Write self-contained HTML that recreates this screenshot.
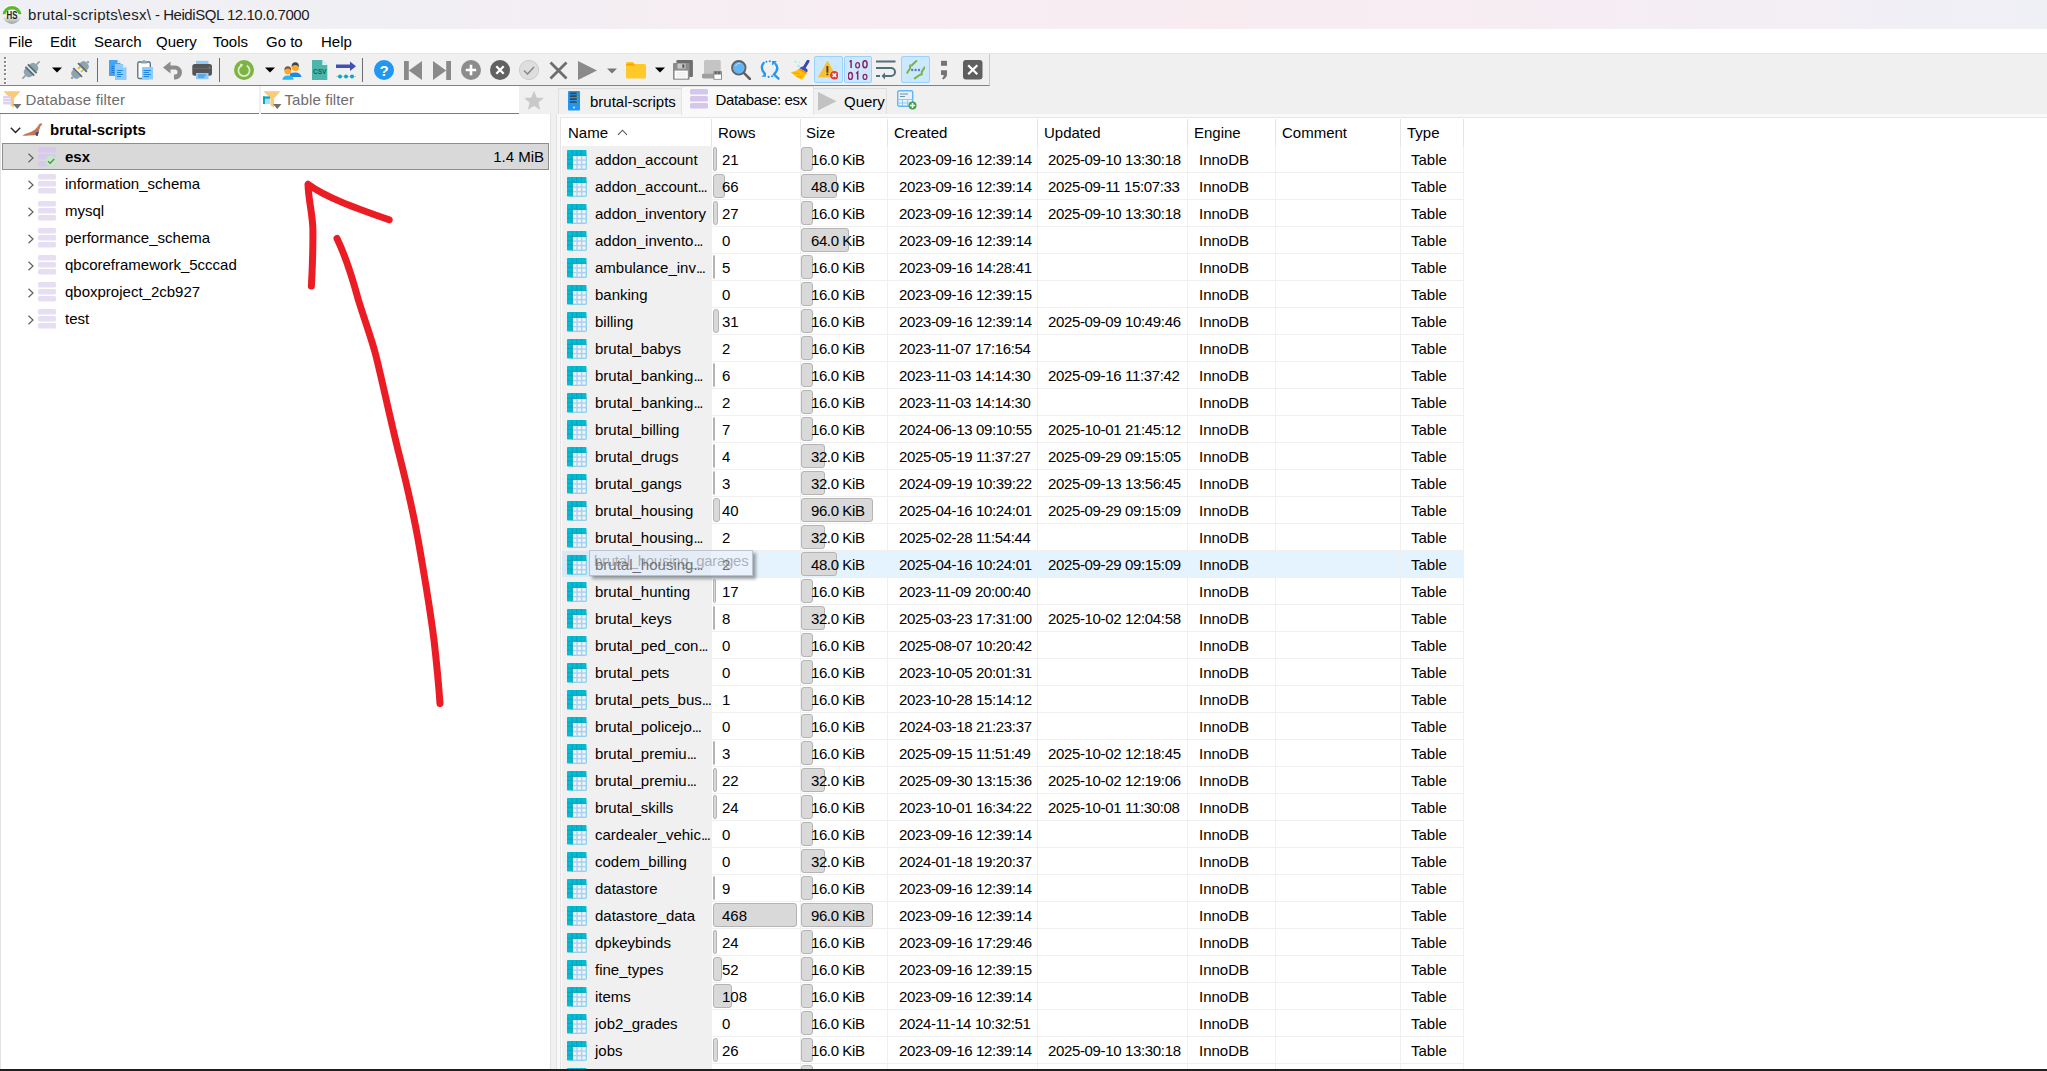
<!DOCTYPE html>
<html><head><meta charset="utf-8">
<style>
*{box-sizing:border-box;margin:0;padding:0}
html,body{width:2047px;height:1071px;overflow:hidden;background:#f0f0f0;font-family:"Liberation Sans",sans-serif;font-size:15px;color:#000}
.abs{position:absolute}
svg{display:block}
#title{position:absolute;left:0;top:0;width:2047px;height:29px;background:linear-gradient(90deg,#eef0f5 0%,#f1eff4 20%,#f7edf2 40%,#f8ecf1 60%,#f6edf3 75%,#eff0f6 100%)}
#title .t{position:absolute;left:28px;top:5.5px;font-size:15px;color:#1c1c1c;white-space:nowrap}
#menu{position:absolute;left:0;top:29px;width:2047px;height:24px;background:#fff}
#menu span{position:absolute;top:4px;font-size:15px}
#tb{position:absolute;left:0;top:54px;width:990px;height:32px;background:#f0f0f0;border-right:1px solid #c8c8c8;border-bottom:1px solid #828282}
#filters{position:absolute;left:0;top:86px;width:551px;height:28px;background:#f0f0f0}
.fbox{position:absolute;top:0;height:28px;background:#fff;border-bottom:1px solid #7a7a7a}
.fbox span{position:absolute;left:25px;top:5px;color:#6d6d6d}
#tree{position:absolute;left:0;top:114px;width:551px;height:955px;background:#fff;border-left:1px solid #e3e3e3;border-right:1px solid #e3e3e3}
.tn{position:absolute;height:27px;left:0;width:551px}
.tn span{position:absolute;top:5px}
#page{position:absolute;left:556px;top:113px;width:1491px;height:956px;background:#f9f9f9;border-left:1px solid #e3e3e3;border-top:1px solid #e3e3e3}
#grid{position:absolute;left:560px;top:117px;width:1487px;height:952px;background:#fff;border-left:1px solid #e5e5e5;border-top:1px solid #e5e5e5;overflow:hidden}
.row{position:absolute;left:1px;width:902px;height:27px}
.row .ncol{position:absolute;left:0;top:0;width:150px;height:27px}
.row::after{content:"";position:absolute;left:0;top:26px;width:902px;height:1px;background:#f0f0f0}
.ticon{position:absolute;left:5px;top:4px;width:20px;height:20px}
.c{position:absolute;top:5px;white-space:nowrap}
.dt{letter-spacing:-0.35px}
.sz{width:62px;text-align:right;letter-spacing:-0.4px}
.bar{position:absolute;top:1px;height:24px;background:#d9d9d9;border:1px solid #b4b4b4;border-radius:3px}
.vl{position:absolute;top:0;width:1px;height:952px;background:#f0f0f0}
.hd{position:absolute;top:5.5px;white-space:nowrap}
.hdiv{position:absolute;top:1px;width:1px;height:27px;background:#e5e5e5}
#bottom{position:absolute;left:0;top:1069px;width:2047px;height:2px;background:#1f1f1f}
.tab{position:absolute;height:26px}
.tt{white-space:nowrap}
.tab span{position:absolute;white-space:nowrap}
</style></head><body>
<div id="title">
 <svg class="abs" style="left:2px;top:3.5px" width="20" height="20" viewBox="0 0 20 20"><defs><linearGradient id="hg" x1="0" y1="0" x2="0" y2="1"><stop offset="0" stop-color="#fff"/><stop offset="0.6" stop-color="#f2f2f2"/><stop offset="1" stop-color="#9aa29c"/></linearGradient></defs><circle cx="10" cy="10.3" r="9.6" fill="url(#hg)"/><path d="M0.5 10.2A9.6 9.6 0 0 1 19.5 10.2L16.5 10.2A6.6 5.8 0 0 0 3.5 10.2Z" fill="#5cb82e"/><text x="10" y="14.7" font-size="10.5" font-family="Liberation Sans" text-anchor="middle" fill="#222" transform="translate(10 0) scale(0.75 1) translate(-10 0)" font-weight="bold">HS</text></svg>
 <div class="t"><span style="letter-spacing:0.3px">brutal-scripts\esx\</span><span style="letter-spacing:-0.45px"> - HeidiSQL 12.10.0.7000</span></div>
</div>
<div id="menu">
 <span style="left:8.5px">File</span><span style="left:50px">Edit</span><span style="left:94px">Search</span><span style="left:156px">Query</span><span style="left:213px">Tools</span><span style="left:266px">Go to</span><span style="left:321px">Help</span>
</div>
<div class="abs" style="left:0;top:53px;width:2047px;height:1px;background:#e6e6e6"></div>
<div id="tb"></div>
<div class="abs" style="left:4px;top:57.0px;width:2px;height:2px;background:#8a8a8a;box-shadow:1px 1px 0 #fff"></div><div class="abs" style="left:4px;top:61.1px;width:2px;height:2px;background:#8a8a8a;box-shadow:1px 1px 0 #fff"></div><div class="abs" style="left:4px;top:65.2px;width:2px;height:2px;background:#8a8a8a;box-shadow:1px 1px 0 #fff"></div><div class="abs" style="left:4px;top:69.3px;width:2px;height:2px;background:#8a8a8a;box-shadow:1px 1px 0 #fff"></div><div class="abs" style="left:4px;top:73.4px;width:2px;height:2px;background:#8a8a8a;box-shadow:1px 1px 0 #fff"></div><div class="abs" style="left:4px;top:77.5px;width:2px;height:2px;background:#8a8a8a;box-shadow:1px 1px 0 #fff"></div><div class="abs" style="left:4px;top:81.6px;width:2px;height:2px;background:#8a8a8a;box-shadow:1px 1px 0 #fff"></div><svg class="abs" style="left:21px;top:60px" width="20" height="20" viewBox="0 0 20 20"><g transform="rotate(45 10 10)">
<rect x="9.1" y="-2.4" width="1.8" height="5" rx="0.9" fill="#90a4ae"/><rect x="9.1" y="17.4" width="1.8" height="5" rx="0.9" fill="#90a4ae"/>
<path d="M5 9V6.8Q5 2.2 10 2.2Q15 2.2 15 6.8V9Z" fill="#90a4ae"/><rect x="3.8" y="7.4" width="12.4" height="1.8" fill="#546e7a"/>
<path d="M5 11V13.2Q5 17.8 10 17.8Q15 17.8 15 13.2V11Z" fill="#90a4ae"/><rect x="3.8" y="10.8" width="12.4" height="1.8" fill="#546e7a"/>
</g></svg><svg class="abs" style="left:51.5px;top:67px" width="10" height="6" viewBox="0 0 10 6"><path d="M0 0.5H10L5 5.5Z" fill="#000"/></svg><svg class="abs" style="left:70px;top:60px" width="20" height="20" viewBox="0 0 20 20"><g transform="rotate(45 10 10)">
<circle cx="10" cy="-1.2" r="1.3" fill="#90a4ae"/><circle cx="10" cy="21.2" r="1.3" fill="#90a4ae"/>
<path d="M5 6V4.6Q5 0 10 0Q15 0 15 4.6V6Z" fill="#90a4ae"/><rect x="3.8" y="5.6" width="12.4" height="1.9" fill="#546e7a"/>
<rect x="7" y="7.5" width="1.7" height="3.2" fill="#ffb300"/><rect x="11.3" y="7.5" width="1.7" height="3.2" fill="#ffb300"/>
<rect x="3.8" y="12.5" width="12.4" height="1.9" fill="#546e7a"/><path d="M5 14.2V15.4Q5 20 10 20Q15 20 15 15.4V14.2Z" fill="#90a4ae"/>
</g></svg><div class="abs" style="left:97px;top:58px;width:1px;height:24px;background:#6d6d6d"></div><svg class="abs" style="left:109px;top:60px" width="20" height="20" viewBox="0 0 20 20"><path d="M0 0H8.5L11.5 3V16H0Z" fill="#42a5f5"/><path d="M8.5 0V3H11.5Z" fill="#e3f2fd"/>
<path d="M2.5 6.5H5M2.5 8.5H5M2.5 10.5H5M2.5 12.5H5" stroke="#1976d2" stroke-width="1"/>
<path d="M6 4H14L17.5 7.5V20H6Z" fill="#90caf9"/><path d="M14 4V7.5H17.5Z" fill="#e3f2fd"/>
<path d="M8 10.5H13.5M8 12.5H12M8 14.5H14M8 16.5H12" stroke="#1e88e5" stroke-width="1"/></svg><svg class="abs" style="left:137px;top:60px" width="20" height="20" viewBox="0 0 20 20"><rect x="0.8" y="2" width="12.5" height="16.5" rx="1.5" fill="#fff" stroke="#546e7a" stroke-width="1.3"/>
<path d="M4 1.2H10V3.5H4Z" fill="#90a4ae"/><circle cx="7" cy="1.3" r="1.2" fill="#90a4ae"/>
<rect x="5" y="7" width="11" height="12.5" fill="#90caf9"/>
<path d="M6.5 10.5H14M6.5 12.5H12M6.5 14.5H14M6.5 16.5H12" stroke="#1e88e5" stroke-width="1"/></svg><svg class="abs" style="left:163px;top:61px" width="20" height="20" viewBox="0 0 20 20"><path d="M0 6.5L7.5 0.5V4.5H12A7 7 0 0 1 12 18.5H11V13.5H12A2 2 0 0 0 12 8.5H7.5V12.5Z" fill="#8c8c8c"/></svg><svg class="abs" style="left:192px;top:60px" width="20" height="20" viewBox="0 0 20 20"><rect x="4" y="0.8" width="12.5" height="5" fill="#90caf9"/>
<rect x="0.3" y="4" width="19.7" height="11.8" rx="2.5" fill="#555"/>
<rect x="0.3" y="8" width="19.7" height="1" fill="#666"/>
<circle cx="17.5" cy="7.3" r="0.8" fill="#4caf50"/>
<rect x="4" y="13" width="12.5" height="6.2" fill="#90caf9"/>
<path d="M6 15H14M6 17H12.5" stroke="#1e88e5" stroke-width="1"/></svg><div class="abs" style="left:219px;top:58px;width:1px;height:24px;background:#6d6d6d"></div><svg class="abs" style="left:234px;top:60px" width="20" height="20" viewBox="0 0 20 20"><circle cx="10" cy="10" r="10" fill="#7cb342"/>
<path d="M7.2 5.6A5.6 5.6 0 1 0 12.8 5.6" fill="none" stroke="#dcedc8" stroke-width="1.8"/>
<path d="M5.5 3.5L9 4.2L7.5 7.5Z" fill="#dcedc8"/></svg><svg class="abs" style="left:264.5px;top:67px" width="10" height="6" viewBox="0 0 10 6"><path d="M0 0.5H10L5 5.5Z" fill="#000"/></svg><svg class="abs" style="left:282px;top:60px" width="20" height="20" viewBox="0 0 20 20"><path d="M8 13.5Q10 12.5 13.5 12.5Q18.5 12.5 19.5 17H8Z" fill="#1e88e5"/>
<circle cx="13.3" cy="7.5" r="3.6" fill="#ffa726"/><path d="M9.6 7Q9.5 2.3 13.3 2.3Q17.1 2.3 17 7Q15.5 4.8 13.3 5Q11 4.8 9.6 7Z" fill="#37474f"/>
<path d="M0.3 19.8Q1 15.5 6 15.5Q11.5 15.5 11.5 19.8Z" fill="#29b6f6"/>
<circle cx="5.8" cy="11" r="3.4" fill="#ffa726"/><path d="M2.4 10.5Q2.3 6.3 5.8 6.3Q9.3 6.3 9.2 10.5Q7.8 8.5 5.8 8.6Q3.8 8.5 2.4 10.5Z" fill="#795548"/></svg><svg class="abs" style="left:311.5px;top:60px" width="20" height="20" viewBox="0 0 20 20"><path d="M0 0H10.3L15.3 5V20H0Z" fill="#4db6ac"/><path d="M10.3 0V5H15.3Z" fill="#e0f2f1"/>
<text x="7.7" y="13.5" font-size="6.5" font-weight="bold" font-family="Liberation Sans" text-anchor="middle" fill="#00695c">CSV</text></svg><svg class="abs" style="left:336px;top:61px" width="20" height="20" viewBox="0 0 20 20"><path d="M0 3.6H14V0.5L20 5.2L14 9.9V6.9H0Z" fill="#3f51b5"/>
<path d="M0 15.5H20" stroke="#9e9e9e" stroke-width="0.5"/>
<circle cx="4" cy="15.5" r="2" fill="#00acc1"/><circle cx="10" cy="15.5" r="2" fill="#00acc1"/><circle cx="16" cy="15.5" r="2" fill="#00acc1"/></svg><div class="abs" style="left:362px;top:58px;width:1px;height:24px;background:#6d6d6d"></div><svg class="abs" style="left:374px;top:60px" width="20" height="20" viewBox="0 0 20 20"><circle cx="10" cy="10" r="10" fill="#2196f3"/>
<text x="10" y="15.8" font-size="15" font-weight="bold" font-family="Liberation Sans" text-anchor="middle" fill="#fff">?</text></svg><svg class="abs" style="left:404px;top:60.5px" width="20" height="20" viewBox="0 0 20 20"><rect x="0" y="0" width="4.8" height="19" fill="#8a8a8a"/><path d="M18 0V19L4.8 9.5Z" fill="#8a8a8a"/></svg><svg class="abs" style="left:433px;top:60.5px" width="20" height="20" viewBox="0 0 20 20"><rect x="13.2" y="0" width="4.8" height="19" fill="#8a8a8a"/><path d="M0 0V19L13.2 9.5Z" fill="#8a8a8a"/></svg><svg class="abs" style="left:461px;top:60px" width="20" height="20" viewBox="0 0 20 20"><circle cx="10" cy="10" r="10" fill="#8c8c8c"/><path d="M10 4.8V15.2M4.8 10H15.2" stroke="#fff" stroke-width="2.6"/></svg><svg class="abs" style="left:490px;top:60px" width="20" height="20" viewBox="0 0 20 20"><circle cx="10" cy="10" r="10" fill="#616161"/><path d="M6.3 6.3L13.7 13.7M13.7 6.3L6.3 13.7" stroke="#fff" stroke-width="2.3"/></svg><svg class="abs" style="left:519px;top:60px" width="20" height="20" viewBox="0 0 20 20"><circle cx="10" cy="10" r="9.6" fill="#dedede" stroke="#c4c4c4" stroke-width="0.8"/><path d="M5 10.5L8.5 14L15 7" fill="none" stroke="#8c8c8c" stroke-width="1.6"/></svg><svg class="abs" style="left:548.5px;top:60.5px" width="20" height="20" viewBox="0 0 20 20"><path d="M1.5 1.5L17.5 17.5M17.5 1.5L1.5 17.5" stroke="#6e6e6e" stroke-width="2.8"/></svg><svg class="abs" style="left:578px;top:60.5px" width="20" height="20" viewBox="0 0 20 20"><path d="M0 0V19L19 9.5Z" fill="#8a8a8a"/></svg><svg class="abs" style="left:607px;top:67.5px" width="10" height="6" viewBox="0 0 10 6"><path d="M0 0.5H10L5 5.5Z" fill="#777"/></svg><svg class="abs" style="left:626px;top:61.5px" width="20" height="20" viewBox="0 0 20 20"><path d="M0 1.5Q0 0 1.5 0H7L8.5 2H18.5Q20 2 20 3.5V15Q20 16.5 18.5 16.5H1.5Q0 16.5 0 15Z" fill="#ffca28"/>
<path d="M0 3Q0 1.5 1.5 1.5H7.5L9 3.5H0Z" fill="#ffa000"/></svg><svg class="abs" style="left:654.5px;top:67px" width="10" height="6" viewBox="0 0 10 6"><path d="M0 0.5H10L5 5.5Z" fill="#000"/></svg><svg class="abs" style="left:673px;top:60px" width="20" height="20" viewBox="0 0 20 20"><rect x="3.4" y="0.1" width="16.5" height="16.8" rx="1" fill="#6e6e6e"/>
<rect x="0" y="3" width="16.6" height="16.8" rx="0.8" fill="#8c8c8c"/>
<rect x="4.5" y="3.6" width="8" height="5" fill="#c8c8c8"/><rect x="9.3" y="4.4" width="2" height="3.4" fill="#555"/>
<rect x="1.6" y="10.6" width="13.2" height="8" fill="#fff"/><path d="M3.5 12.8H13M3.5 14.8H13M3.5 16.8H13" stroke="#dcdcdc" stroke-width="0.7"/></svg><svg class="abs" style="left:702px;top:60px" width="20" height="20" viewBox="0 0 20 20"><rect x="2" y="0.1" width="16.8" height="16" rx="1.5" fill="#c4c4c4"/>
<path d="M0 14.8Q0 13.8 1.2 13.8H12V18.4H1.5Q0 18.4 0 17Z" fill="#9e9e9e"/>
<rect x="11.4" y="11" width="8.6" height="8.8" rx="0.6" fill="#8c8c8c"/><rect x="12.4" y="14.6" width="6.6" height="4.3" fill="#fff"/>
<rect x="13" y="11.6" width="1.4" height="2.4" fill="#5a5a5a"/><rect x="16.2" y="11.6" width="1.4" height="2.4" fill="#5a5a5a"/></svg><svg class="abs" style="left:731px;top:60px" width="20" height="20" viewBox="0 0 20 20"><circle cx="7.8" cy="7.8" r="6.8" fill="#64b5f6" stroke="#616161" stroke-width="1.8"/>
<path d="M4.5 6A4 4 0 0 1 9.5 3.8" fill="none" stroke="#bbdefb" stroke-width="1"/>
<path d="M12.8 12.8L19 19" stroke="#616161" stroke-width="2.5" stroke-linecap="round"/></svg><svg class="abs" style="left:760px;top:60px" width="20" height="20" viewBox="0 0 20 20"><g fill="none" stroke="#2196f3" stroke-width="2.3" stroke-linecap="round"><path d="M3.6 3Q-0.5 8 4.8 13.8"/><path d="M15.4 3.8Q19.8 8.5 14 14.4L18.5 18.6"/></g>
<path d="M1.5 16.8L6 16.8L5.8 12.5Z" fill="#2196f3"/><path d="M12 1.1L16.9 1.1L12.2 5.6Z" fill="#2196f3"/>
<circle cx="6.4" cy="1.8" r="1.05" fill="#2196f3"/><circle cx="9.8" cy="1.2" r="1.05" fill="#2196f3"/><circle cx="8.6" cy="16.9" r="1.05" fill="#2196f3"/><circle cx="12" cy="16.3" r="1.05" fill="#2196f3"/></svg><svg class="abs" style="left:789.5px;top:60px" width="20" height="20" viewBox="0 0 20 20"><circle cx="5.5" cy="1.8" r="1.2" fill="#b2ebf2"/><circle cx="9.2" cy="2.6" r="0.8" fill="#b2ebf2"/><circle cx="8.6" cy="6" r="1.6" fill="#b2ebf2"/>
<path d="M18 1.2L13.8 8.2" stroke="#3949ab" stroke-width="3" stroke-linecap="round"/>
<path d="M9.6 8.2Q11.5 6 13.5 6.8L17.4 9.2Q18.3 11 16.8 12.6Z" fill="#3f51b5"/>
<path d="M9.4 8.4L16.9 12.7Q14.5 17.5 11.6 19.8Q6 17.5 0.8 12.3Q5.5 11.8 9.4 8.4Z" fill="#ffc107"/>
<path d="M9.4 8.4L16.9 12.7L16.2 14L8.6 9.6Z" fill="#ff8f00"/>
<path d="M3.5 12.5L9.5 14M7 16.5L12.5 17" stroke="#ff9800" stroke-width="1"/></svg><div class="abs" style="left:814px;top:56px;width:29px;height:27px;background:#cce8ff;border:1px solid #99d1ff;border-radius:2px"></div><svg class="abs" style="left:818px;top:60px" width="20" height="20" viewBox="0 0 20 20"><path d="M9.5 1.2L18.5 17H0.5Z" fill="#fbc02d" stroke="#fbc02d" stroke-width="0.8" stroke-linejoin="round"/><rect x="8.4" y="6" width="2" height="6.8" rx="0.6" fill="#4a4040"/><rect x="8.4" y="13.6" width="2" height="1.6" rx="0.6" fill="#4a4040"/>
<circle cx="16.4" cy="15.2" r="4.3" fill="#e53935"/><path d="M14.6 13.4L18.2 17M18.2 13.4L14.6 17" stroke="#fff" stroke-width="1.5"/></svg><div class="abs" style="left:843.5px;top:56px;width:28.5px;height:27px;background:#cce8ff;border:1px solid #99d1ff;border-radius:2px"></div><svg class="abs" style="left:847.5px;top:60px" width="20" height="20" viewBox="0 0 20 20"><g fill="none" stroke="#8e2461" stroke-width="1.5">
<path d="M1.6 1.8L3.1 0.4V8"/><ellipse cx="9.6" cy="5.2" rx="1.9" ry="2.6" stroke-width="1.3"/><ellipse cx="17" cy="4.2" rx="2.1" ry="3.5"/>
<ellipse cx="2.4" cy="15.9" rx="2.1" ry="3.5"/><path d="M8.2 13.5L9.7 12.1V19.7"/><ellipse cx="17" cy="16.9" rx="1.9" ry="2.6" stroke-width="1.3"/></g></svg><svg class="abs" style="left:876px;top:60px" width="20" height="20" viewBox="0 0 20 20"><path d="M0 1.5H19.5" stroke="#546e7a" stroke-width="2"/>
<path d="M0 8H15A4 4 0 0 1 15 16H7" fill="none" stroke="#546e7a" stroke-width="2"/>
<path d="M5.5 16L9 12.5V19.5Z" fill="#546e7a"/><path d="M0 16H4" stroke="#546e7a" stroke-width="2"/></svg><div class="abs" style="left:901px;top:56px;width:29px;height:27px;background:#cce8ff;border:1px solid #99d1ff;border-radius:2px"></div><svg class="abs" style="left:905px;top:60px" width="20" height="20" viewBox="0 0 20 20"><g fill="none" stroke="#7cb342" stroke-width="2" stroke-linecap="round" stroke-linejoin="round">
<path d="M2.3 12.6L5.2 8.2L5.1 5.6L6.9 5.2L11.3 1"/><path d="M19.6 7.4L16.7 12L16.8 14.5L15 14.8L9.8 18.4"/></g>
<circle cx="7.2" cy="10" r="1.2" fill="#5c7bc8"/><circle cx="10.6" cy="10" r="1.2" fill="#5c7bc8"/><circle cx="14" cy="10" r="1.2" fill="#5c7bc8"/></svg><svg class="abs" style="left:941px;top:60px" width="20" height="20" viewBox="0 0 20 20"><rect x="0" y="0.8" width="6" height="5" fill="#757575"/><path d="M0 10.2H6V15Q6 17.5 2.5 19.6L1 18.5Q2.6 17 2.8 15H0Z" fill="#757575"/></svg><svg class="abs" style="left:963px;top:60px" width="20" height="20" viewBox="0 0 20 20"><rect x="0" y="0" width="19.5" height="19.5" rx="3" fill="#5f5f5f"/><path d="M5.2 5.2L14.3 14.3M14.3 5.2L5.2 14.3" stroke="#fff" stroke-width="2.2"/></svg>
<div id="filters">
 <div class="fbox" style="left:0;width:259px"><span style="left:25.5px;letter-spacing:0.2px">Database filter</span></div>
 <div class="fbox" style="left:261px;width:258px"><span style="left:23.5px;letter-spacing:0.1px">Table filter</span></div>
</div>
<div id="tree">
</div>
<div id="page"></div>
<div class="abs" style="left:9.5px;top:126.5px"><svg width="11" height="7" viewBox="0 0 11 7"><path d="M0.8 0.8L5.5 5.5L10.2 0.8" fill="none" stroke="#222" stroke-width="1.4"/></svg></div>
<div class="abs" style="left:22px;top:122.5px"><svg width="21" height="15" viewBox="0 0 21 15"><path d="M0.3 12.4Q3 10.6 6 9.9Q10 8.7 13 6.6Q15.5 4.2 17 1.6Q18 0.2 19.3 0.3L20.4 1.6Q19 2.5 18.4 3.6Q17.2 7 16.6 9.5L15.4 13L14.4 12.2Q11 12 6.5 12.5Q3 13 0.3 12.4Z" fill="#c27858"/><path d="M13.6 9.6L16.9 8.4L15.6 13.2L13.9 12.5Z" fill="#34507a"/></svg></div>
<div class="abs tt" style="left:50px;top:121px;font-weight:bold">brutal-scripts</div>
<div class="abs" style="left:2px;top:143px;width:547px;height:27px;background:#d9d9d9;border:1px solid #8e8e8e"></div>
<div class="abs" style="left:26.5px;top:153px"><svg width="8" height="10" viewBox="0 0 8 10"><path d="M1.5 0.8L6 5L1.5 9.2" fill="none" stroke="#606060" stroke-width="1.2"/></svg></div>
<div class="abs" style="left:38px;top:147px"><svg width="18" height="20" viewBox="0 0 18 20"><rect x="0" y="0" width="18" height="5.5" rx="1.5" fill="#d7c8ee"/><rect x="0" y="7" width="18" height="5.5" rx="1.5" fill="#d7c8ee"/><rect x="0" y="14" width="18" height="5.5" rx="1.5" fill="#d7c8ee"/></svg></div>
<svg class="abs" style="left:45px;top:155px" width="12" height="12" viewBox="0 0 12 12"><circle cx="6" cy="6" r="5.6" fill="#c8e6c9"/><path d="M3 6.2L5.2 8.3L9.2 4" fill="none" stroke="#43a047" stroke-width="1.4"/></svg>
<div class="abs tt" style="left:65px;top:148px;font-weight:bold">esx</div>
<div class="abs tt" style="left:440px;top:148px;width:104px;text-align:right">1.4 MiB</div>
<div class="abs" style="left:26.5px;top:180px"><svg width="8" height="10" viewBox="0 0 8 10"><path d="M1.5 0.8L6 5L1.5 9.2" fill="none" stroke="#606060" stroke-width="1.2"/></svg></div>
<div class="abs" style="left:38px;top:174px"><svg width="18" height="20" viewBox="0 0 18 20"><rect x="0" y="0" width="18" height="5.5" rx="1.5" fill="#e6dff3"/><rect x="0" y="7" width="18" height="5.5" rx="1.5" fill="#e6dff3"/><rect x="0" y="14" width="18" height="5.5" rx="1.5" fill="#e6dff3"/></svg></div>
<div class="abs tt" style="left:65px;top:175px">information_schema</div>
<div class="abs" style="left:26.5px;top:207px"><svg width="8" height="10" viewBox="0 0 8 10"><path d="M1.5 0.8L6 5L1.5 9.2" fill="none" stroke="#606060" stroke-width="1.2"/></svg></div>
<div class="abs" style="left:38px;top:201px"><svg width="18" height="20" viewBox="0 0 18 20"><rect x="0" y="0" width="18" height="5.5" rx="1.5" fill="#e6dff3"/><rect x="0" y="7" width="18" height="5.5" rx="1.5" fill="#e6dff3"/><rect x="0" y="14" width="18" height="5.5" rx="1.5" fill="#e6dff3"/></svg></div>
<div class="abs tt" style="left:65px;top:202px">mysql</div>
<div class="abs" style="left:26.5px;top:234px"><svg width="8" height="10" viewBox="0 0 8 10"><path d="M1.5 0.8L6 5L1.5 9.2" fill="none" stroke="#606060" stroke-width="1.2"/></svg></div>
<div class="abs" style="left:38px;top:228px"><svg width="18" height="20" viewBox="0 0 18 20"><rect x="0" y="0" width="18" height="5.5" rx="1.5" fill="#e6dff3"/><rect x="0" y="7" width="18" height="5.5" rx="1.5" fill="#e6dff3"/><rect x="0" y="14" width="18" height="5.5" rx="1.5" fill="#e6dff3"/></svg></div>
<div class="abs tt" style="left:65px;top:229px">performance_schema</div>
<div class="abs" style="left:26.5px;top:261px"><svg width="8" height="10" viewBox="0 0 8 10"><path d="M1.5 0.8L6 5L1.5 9.2" fill="none" stroke="#606060" stroke-width="1.2"/></svg></div>
<div class="abs" style="left:38px;top:255px"><svg width="18" height="20" viewBox="0 0 18 20"><rect x="0" y="0" width="18" height="5.5" rx="1.5" fill="#e6dff3"/><rect x="0" y="7" width="18" height="5.5" rx="1.5" fill="#e6dff3"/><rect x="0" y="14" width="18" height="5.5" rx="1.5" fill="#e6dff3"/></svg></div>
<div class="abs tt" style="left:65px;top:256px">qbcoreframework_5cccad</div>
<div class="abs" style="left:26.5px;top:288px"><svg width="8" height="10" viewBox="0 0 8 10"><path d="M1.5 0.8L6 5L1.5 9.2" fill="none" stroke="#606060" stroke-width="1.2"/></svg></div>
<div class="abs" style="left:38px;top:282px"><svg width="18" height="20" viewBox="0 0 18 20"><rect x="0" y="0" width="18" height="5.5" rx="1.5" fill="#e6dff3"/><rect x="0" y="7" width="18" height="5.5" rx="1.5" fill="#e6dff3"/><rect x="0" y="14" width="18" height="5.5" rx="1.5" fill="#e6dff3"/></svg></div>
<div class="abs tt" style="left:65px;top:283px">qboxproject_2cb927</div>
<div class="abs" style="left:26.5px;top:315px"><svg width="8" height="10" viewBox="0 0 8 10"><path d="M1.5 0.8L6 5L1.5 9.2" fill="none" stroke="#606060" stroke-width="1.2"/></svg></div>
<div class="abs" style="left:38px;top:309px"><svg width="18" height="20" viewBox="0 0 18 20"><rect x="0" y="0" width="18" height="5.5" rx="1.5" fill="#e6dff3"/><rect x="0" y="7" width="18" height="5.5" rx="1.5" fill="#e6dff3"/><rect x="0" y="14" width="18" height="5.5" rx="1.5" fill="#e6dff3"/></svg></div>
<div class="abs tt" style="left:65px;top:310px">test</div>
<div class="abs" style="left:551px;top:86px;width:1496px;height:28px;background:#f0f0f0"></div>
<div class="abs" style="left:558px;top:88px;width:124px;height:26px;background:#f0f0f0;border:1px solid #dfdfdf;border-bottom:none"></div>
<div class="abs" style="left:568px;top:91px"><svg width="12" height="20" viewBox="0 0 12 20"><rect x="0" y="0" width="12" height="19.5" rx="1" fill="#2196f3"/><path d="M1.8 2.3H10.2M1.8 5.2H10.2M1.8 8.1H10.2M1.8 11H10.2" stroke="#37474f" stroke-width="1.7"/><path d="M8.8 2.3H10.2M8.8 5.2H10.2M8.8 8.1H10.2M8.8 11H10.2" stroke="#7cb342" stroke-width="1.7"/><circle cx="6" cy="16.5" r="0.9" fill="#e3f2fd"/></svg></div>
<div class="abs tt" style="left:590px;top:93px">brutal-scripts</div>
<div class="abs" style="left:813px;top:88px;width:74px;height:26px;background:#f0f0f0;border:1px solid #dfdfdf;border-bottom:none"></div>
<svg class="abs" style="left:818px;top:91.5px" width="19" height="19" viewBox="0 0 19 19"><path d="M0 0V18.5L18.5 9.25Z" fill="#c2c2c2"/></svg>
<div class="abs tt" style="left:844px;top:93px">Query</div>
<div class="abs" style="left:681px;top:86px;width:133px;height:29px;background:#f9f9f9;border:1px solid #e3e3e3;border-bottom:none"></div>
<div class="abs" style="left:690px;top:89px"><svg width="18" height="20" viewBox="0 0 18 20"><rect x="0" y="0" width="18" height="5.5" rx="1.5" fill="#d4c6ec"/><rect x="0" y="7" width="18" height="5.5" rx="1.5" fill="#d4c6ec"/><rect x="0" y="14" width="18" height="5.5" rx="1.5" fill="#d4c6ec"/></svg></div>
<div class="abs tt" style="left:715.5px;top:91px;letter-spacing:-0.35px">Database: esx</div>
<div class="abs" style="left:897px;top:90px"><svg width="20" height="20" viewBox="0 0 20 20"><rect x="0.7" y="0.7" width="15" height="15.5" rx="1.5" fill="#e3f2fd" stroke="#64b5f6" stroke-width="1.4"/><path d="M3 4H11M3 6.5H8" stroke="#78909c" stroke-width="1.2"/><path d="M1 9.5H15.5M1 13H15.5M5.5 9V16M10.5 9V16" stroke="#90caf9" stroke-width="1"/><circle cx="15.5" cy="15.5" r="4" fill="#43a047"/><path d="M15.5 13V18M13 15.5H18" stroke="#fff" stroke-width="1.5"/></svg></div>
<div id="grid">
 <div class="hd" style="left:7px">Name</div>
 <div class="hdiv" style="left:150px"></div>
 <div class="hd" style="left:157px">Rows</div>
 <div class="hdiv" style="left:239px"></div>
 <div class="hd" style="left:245px">Size</div>
 <div class="hdiv" style="left:326px"></div>
 <div class="hd" style="left:333px">Created</div>
 <div class="hdiv" style="left:476px"></div>
 <div class="hd" style="left:483px">Updated</div>
 <div class="hdiv" style="left:626px"></div>
 <div class="hd" style="left:633px">Engine</div>
 <div class="hdiv" style="left:714px"></div>
 <div class="hd" style="left:721px">Comment</div>
 <div class="hdiv" style="left:839px"></div>
 <div class="hd" style="left:846px">Type</div>
 <div class="hdiv" style="left:902px"></div>
 <div class="row" style="top:28px;background:#ffffff">
<div class="ncol" style="background:#f0f0f0"></div>
<div class="ticon"><svg width="20" height="20" viewBox="0 0 20 20"><rect x="0" y="0" width="19.5" height="19.5" rx="0.8" fill="#00bcd4"/><rect x="5.5" y="5.5" width="14" height="14" fill="#a6d2f6"/><rect x="6.2" y="6.2" width="3.1" height="3.1" fill="#f3f4f6"/><rect x="6.2" y="10.8" width="3.1" height="3.1" fill="#f3f4f6"/><rect x="6.2" y="15.4" width="3.1" height="3.1" fill="#f3f4f6"/><rect x="10.8" y="6.2" width="3.1" height="3.1" fill="#f3f4f6"/><rect x="10.8" y="10.8" width="3.1" height="3.1" fill="#f3f4f6"/><rect x="10.8" y="15.4" width="3.1" height="3.1" fill="#f3f4f6"/><rect x="15.4" y="6.2" width="3.1" height="3.1" fill="#f3f4f6"/><rect x="15.4" y="10.8" width="3.1" height="3.1" fill="#f3f4f6"/><rect x="15.4" y="15.4" width="3.1" height="3.1" fill="#f3f4f6"/><path d="M5.2 0V19.5M9.8 0V5.5M14.3 0V5.5M0 9.4H5.5M0 14H5.5M0 5.3H19.5" stroke="#00a3b8" stroke-width="0.9"/></svg></div>
<div class="c" style="left:33px">addon_account</div>
<div class="bar" style="left:151px;width:3.8px"></div>
<div class="c" style="left:160px">21</div>
<div class="bar" style="left:239px;width:12.0px"></div>
<div class="c sz" style="left:240.5px">16.0 KiB</div>
<div class="c dt" style="left:337px">2023-09-16 12:39:14</div>
<div class="c dt" style="left:486px">2025-09-10 13:30:18</div>
<div class="c" style="left:637px">InnoDB</div>
<div class="c" style="left:849px">Table</div>
</div>
<div class="row" style="top:55px;background:#ffffff">
<div class="ncol" style="background:#f0f0f0"></div>
<div class="ticon"><svg width="20" height="20" viewBox="0 0 20 20"><rect x="0" y="0" width="19.5" height="19.5" rx="0.8" fill="#00bcd4"/><rect x="5.5" y="5.5" width="14" height="14" fill="#a6d2f6"/><rect x="6.2" y="6.2" width="3.1" height="3.1" fill="#f3f4f6"/><rect x="6.2" y="10.8" width="3.1" height="3.1" fill="#f3f4f6"/><rect x="6.2" y="15.4" width="3.1" height="3.1" fill="#f3f4f6"/><rect x="10.8" y="6.2" width="3.1" height="3.1" fill="#f3f4f6"/><rect x="10.8" y="10.8" width="3.1" height="3.1" fill="#f3f4f6"/><rect x="10.8" y="15.4" width="3.1" height="3.1" fill="#f3f4f6"/><rect x="15.4" y="6.2" width="3.1" height="3.1" fill="#f3f4f6"/><rect x="15.4" y="10.8" width="3.1" height="3.1" fill="#f3f4f6"/><rect x="15.4" y="15.4" width="3.1" height="3.1" fill="#f3f4f6"/><path d="M5.2 0V19.5M9.8 0V5.5M14.3 0V5.5M0 9.4H5.5M0 14H5.5M0 5.3H19.5" stroke="#00a3b8" stroke-width="0.9"/></svg></div>
<div class="c" style="left:33px">addon_account<span style="letter-spacing:-1.2px">...</span></div>
<div class="bar" style="left:151px;width:11.8px"></div>
<div class="c" style="left:160px">66</div>
<div class="bar" style="left:239px;width:36.0px"></div>
<div class="c sz" style="left:240.5px">48.0 KiB</div>
<div class="c dt" style="left:337px">2023-09-16 12:39:14</div>
<div class="c dt" style="left:486px">2025-09-11 15:07:33</div>
<div class="c" style="left:637px">InnoDB</div>
<div class="c" style="left:849px">Table</div>
</div>
<div class="row" style="top:82px;background:#ffffff">
<div class="ncol" style="background:#f0f0f0"></div>
<div class="ticon"><svg width="20" height="20" viewBox="0 0 20 20"><rect x="0" y="0" width="19.5" height="19.5" rx="0.8" fill="#00bcd4"/><rect x="5.5" y="5.5" width="14" height="14" fill="#a6d2f6"/><rect x="6.2" y="6.2" width="3.1" height="3.1" fill="#f3f4f6"/><rect x="6.2" y="10.8" width="3.1" height="3.1" fill="#f3f4f6"/><rect x="6.2" y="15.4" width="3.1" height="3.1" fill="#f3f4f6"/><rect x="10.8" y="6.2" width="3.1" height="3.1" fill="#f3f4f6"/><rect x="10.8" y="10.8" width="3.1" height="3.1" fill="#f3f4f6"/><rect x="10.8" y="15.4" width="3.1" height="3.1" fill="#f3f4f6"/><rect x="15.4" y="6.2" width="3.1" height="3.1" fill="#f3f4f6"/><rect x="15.4" y="10.8" width="3.1" height="3.1" fill="#f3f4f6"/><rect x="15.4" y="15.4" width="3.1" height="3.1" fill="#f3f4f6"/><path d="M5.2 0V19.5M9.8 0V5.5M14.3 0V5.5M0 9.4H5.5M0 14H5.5M0 5.3H19.5" stroke="#00a3b8" stroke-width="0.9"/></svg></div>
<div class="c" style="left:33px">addon_inventory</div>
<div class="bar" style="left:151px;width:4.8px"></div>
<div class="c" style="left:160px">27</div>
<div class="bar" style="left:239px;width:12.0px"></div>
<div class="c sz" style="left:240.5px">16.0 KiB</div>
<div class="c dt" style="left:337px">2023-09-16 12:39:14</div>
<div class="c dt" style="left:486px">2025-09-10 13:30:18</div>
<div class="c" style="left:637px">InnoDB</div>
<div class="c" style="left:849px">Table</div>
</div>
<div class="row" style="top:109px;background:#ffffff">
<div class="ncol" style="background:#f0f0f0"></div>
<div class="ticon"><svg width="20" height="20" viewBox="0 0 20 20"><rect x="0" y="0" width="19.5" height="19.5" rx="0.8" fill="#00bcd4"/><rect x="5.5" y="5.5" width="14" height="14" fill="#a6d2f6"/><rect x="6.2" y="6.2" width="3.1" height="3.1" fill="#f3f4f6"/><rect x="6.2" y="10.8" width="3.1" height="3.1" fill="#f3f4f6"/><rect x="6.2" y="15.4" width="3.1" height="3.1" fill="#f3f4f6"/><rect x="10.8" y="6.2" width="3.1" height="3.1" fill="#f3f4f6"/><rect x="10.8" y="10.8" width="3.1" height="3.1" fill="#f3f4f6"/><rect x="10.8" y="15.4" width="3.1" height="3.1" fill="#f3f4f6"/><rect x="15.4" y="6.2" width="3.1" height="3.1" fill="#f3f4f6"/><rect x="15.4" y="10.8" width="3.1" height="3.1" fill="#f3f4f6"/><rect x="15.4" y="15.4" width="3.1" height="3.1" fill="#f3f4f6"/><path d="M5.2 0V19.5M9.8 0V5.5M14.3 0V5.5M0 9.4H5.5M0 14H5.5M0 5.3H19.5" stroke="#00a3b8" stroke-width="0.9"/></svg></div>
<div class="c" style="left:33px">addon_invento<span style="letter-spacing:-1.2px">...</span></div>
<div class="c" style="left:160px">0</div>
<div class="bar" style="left:239px;width:48.0px"></div>
<div class="c sz" style="left:240.5px">64.0 KiB</div>
<div class="c dt" style="left:337px">2023-09-16 12:39:14</div>
<div class="c dt" style="left:486px"></div>
<div class="c" style="left:637px">InnoDB</div>
<div class="c" style="left:849px">Table</div>
</div>
<div class="row" style="top:136px;background:#ffffff">
<div class="ncol" style="background:#f0f0f0"></div>
<div class="ticon"><svg width="20" height="20" viewBox="0 0 20 20"><rect x="0" y="0" width="19.5" height="19.5" rx="0.8" fill="#00bcd4"/><rect x="5.5" y="5.5" width="14" height="14" fill="#a6d2f6"/><rect x="6.2" y="6.2" width="3.1" height="3.1" fill="#f3f4f6"/><rect x="6.2" y="10.8" width="3.1" height="3.1" fill="#f3f4f6"/><rect x="6.2" y="15.4" width="3.1" height="3.1" fill="#f3f4f6"/><rect x="10.8" y="6.2" width="3.1" height="3.1" fill="#f3f4f6"/><rect x="10.8" y="10.8" width="3.1" height="3.1" fill="#f3f4f6"/><rect x="10.8" y="15.4" width="3.1" height="3.1" fill="#f3f4f6"/><rect x="15.4" y="6.2" width="3.1" height="3.1" fill="#f3f4f6"/><rect x="15.4" y="10.8" width="3.1" height="3.1" fill="#f3f4f6"/><rect x="15.4" y="15.4" width="3.1" height="3.1" fill="#f3f4f6"/><path d="M5.2 0V19.5M9.8 0V5.5M14.3 0V5.5M0 9.4H5.5M0 14H5.5M0 5.3H19.5" stroke="#00a3b8" stroke-width="0.9"/></svg></div>
<div class="c" style="left:33px">ambulance_inv<span style="letter-spacing:-1.2px">...</span></div>
<div class="bar" style="left:151px;width:1.5px"></div>
<div class="c" style="left:160px">5</div>
<div class="bar" style="left:239px;width:12.0px"></div>
<div class="c sz" style="left:240.5px">16.0 KiB</div>
<div class="c dt" style="left:337px">2023-09-16 14:28:41</div>
<div class="c dt" style="left:486px"></div>
<div class="c" style="left:637px">InnoDB</div>
<div class="c" style="left:849px">Table</div>
</div>
<div class="row" style="top:163px;background:#ffffff">
<div class="ncol" style="background:#f0f0f0"></div>
<div class="ticon"><svg width="20" height="20" viewBox="0 0 20 20"><rect x="0" y="0" width="19.5" height="19.5" rx="0.8" fill="#00bcd4"/><rect x="5.5" y="5.5" width="14" height="14" fill="#a6d2f6"/><rect x="6.2" y="6.2" width="3.1" height="3.1" fill="#f3f4f6"/><rect x="6.2" y="10.8" width="3.1" height="3.1" fill="#f3f4f6"/><rect x="6.2" y="15.4" width="3.1" height="3.1" fill="#f3f4f6"/><rect x="10.8" y="6.2" width="3.1" height="3.1" fill="#f3f4f6"/><rect x="10.8" y="10.8" width="3.1" height="3.1" fill="#f3f4f6"/><rect x="10.8" y="15.4" width="3.1" height="3.1" fill="#f3f4f6"/><rect x="15.4" y="6.2" width="3.1" height="3.1" fill="#f3f4f6"/><rect x="15.4" y="10.8" width="3.1" height="3.1" fill="#f3f4f6"/><rect x="15.4" y="15.4" width="3.1" height="3.1" fill="#f3f4f6"/><path d="M5.2 0V19.5M9.8 0V5.5M14.3 0V5.5M0 9.4H5.5M0 14H5.5M0 5.3H19.5" stroke="#00a3b8" stroke-width="0.9"/></svg></div>
<div class="c" style="left:33px">banking</div>
<div class="c" style="left:160px">0</div>
<div class="bar" style="left:239px;width:12.0px"></div>
<div class="c sz" style="left:240.5px">16.0 KiB</div>
<div class="c dt" style="left:337px">2023-09-16 12:39:15</div>
<div class="c dt" style="left:486px"></div>
<div class="c" style="left:637px">InnoDB</div>
<div class="c" style="left:849px">Table</div>
</div>
<div class="row" style="top:190px;background:#ffffff">
<div class="ncol" style="background:#f0f0f0"></div>
<div class="ticon"><svg width="20" height="20" viewBox="0 0 20 20"><rect x="0" y="0" width="19.5" height="19.5" rx="0.8" fill="#00bcd4"/><rect x="5.5" y="5.5" width="14" height="14" fill="#a6d2f6"/><rect x="6.2" y="6.2" width="3.1" height="3.1" fill="#f3f4f6"/><rect x="6.2" y="10.8" width="3.1" height="3.1" fill="#f3f4f6"/><rect x="6.2" y="15.4" width="3.1" height="3.1" fill="#f3f4f6"/><rect x="10.8" y="6.2" width="3.1" height="3.1" fill="#f3f4f6"/><rect x="10.8" y="10.8" width="3.1" height="3.1" fill="#f3f4f6"/><rect x="10.8" y="15.4" width="3.1" height="3.1" fill="#f3f4f6"/><rect x="15.4" y="6.2" width="3.1" height="3.1" fill="#f3f4f6"/><rect x="15.4" y="10.8" width="3.1" height="3.1" fill="#f3f4f6"/><rect x="15.4" y="15.4" width="3.1" height="3.1" fill="#f3f4f6"/><path d="M5.2 0V19.5M9.8 0V5.5M14.3 0V5.5M0 9.4H5.5M0 14H5.5M0 5.3H19.5" stroke="#00a3b8" stroke-width="0.9"/></svg></div>
<div class="c" style="left:33px">billing</div>
<div class="bar" style="left:151px;width:5.6px"></div>
<div class="c" style="left:160px">31</div>
<div class="bar" style="left:239px;width:12.0px"></div>
<div class="c sz" style="left:240.5px">16.0 KiB</div>
<div class="c dt" style="left:337px">2023-09-16 12:39:14</div>
<div class="c dt" style="left:486px">2025-09-09 10:49:46</div>
<div class="c" style="left:637px">InnoDB</div>
<div class="c" style="left:849px">Table</div>
</div>
<div class="row" style="top:217px;background:#ffffff">
<div class="ncol" style="background:#f0f0f0"></div>
<div class="ticon"><svg width="20" height="20" viewBox="0 0 20 20"><rect x="0" y="0" width="19.5" height="19.5" rx="0.8" fill="#00bcd4"/><rect x="5.5" y="5.5" width="14" height="14" fill="#a6d2f6"/><rect x="6.2" y="6.2" width="3.1" height="3.1" fill="#f3f4f6"/><rect x="6.2" y="10.8" width="3.1" height="3.1" fill="#f3f4f6"/><rect x="6.2" y="15.4" width="3.1" height="3.1" fill="#f3f4f6"/><rect x="10.8" y="6.2" width="3.1" height="3.1" fill="#f3f4f6"/><rect x="10.8" y="10.8" width="3.1" height="3.1" fill="#f3f4f6"/><rect x="10.8" y="15.4" width="3.1" height="3.1" fill="#f3f4f6"/><rect x="15.4" y="6.2" width="3.1" height="3.1" fill="#f3f4f6"/><rect x="15.4" y="10.8" width="3.1" height="3.1" fill="#f3f4f6"/><rect x="15.4" y="15.4" width="3.1" height="3.1" fill="#f3f4f6"/><path d="M5.2 0V19.5M9.8 0V5.5M14.3 0V5.5M0 9.4H5.5M0 14H5.5M0 5.3H19.5" stroke="#00a3b8" stroke-width="0.9"/></svg></div>
<div class="c" style="left:33px">brutal_babys</div>
<div class="c" style="left:160px">2</div>
<div class="bar" style="left:239px;width:12.0px"></div>
<div class="c sz" style="left:240.5px">16.0 KiB</div>
<div class="c dt" style="left:337px">2023-11-07 17:16:54</div>
<div class="c dt" style="left:486px"></div>
<div class="c" style="left:637px">InnoDB</div>
<div class="c" style="left:849px">Table</div>
</div>
<div class="row" style="top:244px;background:#ffffff">
<div class="ncol" style="background:#f0f0f0"></div>
<div class="ticon"><svg width="20" height="20" viewBox="0 0 20 20"><rect x="0" y="0" width="19.5" height="19.5" rx="0.8" fill="#00bcd4"/><rect x="5.5" y="5.5" width="14" height="14" fill="#a6d2f6"/><rect x="6.2" y="6.2" width="3.1" height="3.1" fill="#f3f4f6"/><rect x="6.2" y="10.8" width="3.1" height="3.1" fill="#f3f4f6"/><rect x="6.2" y="15.4" width="3.1" height="3.1" fill="#f3f4f6"/><rect x="10.8" y="6.2" width="3.1" height="3.1" fill="#f3f4f6"/><rect x="10.8" y="10.8" width="3.1" height="3.1" fill="#f3f4f6"/><rect x="10.8" y="15.4" width="3.1" height="3.1" fill="#f3f4f6"/><rect x="15.4" y="6.2" width="3.1" height="3.1" fill="#f3f4f6"/><rect x="15.4" y="10.8" width="3.1" height="3.1" fill="#f3f4f6"/><rect x="15.4" y="15.4" width="3.1" height="3.1" fill="#f3f4f6"/><path d="M5.2 0V19.5M9.8 0V5.5M14.3 0V5.5M0 9.4H5.5M0 14H5.5M0 5.3H19.5" stroke="#00a3b8" stroke-width="0.9"/></svg></div>
<div class="c" style="left:33px">brutal_banking<span style="letter-spacing:-1.2px">...</span></div>
<div class="bar" style="left:151px;width:1.5px"></div>
<div class="c" style="left:160px">6</div>
<div class="bar" style="left:239px;width:12.0px"></div>
<div class="c sz" style="left:240.5px">16.0 KiB</div>
<div class="c dt" style="left:337px">2023-11-03 14:14:30</div>
<div class="c dt" style="left:486px">2025-09-16 11:37:42</div>
<div class="c" style="left:637px">InnoDB</div>
<div class="c" style="left:849px">Table</div>
</div>
<div class="row" style="top:271px;background:#ffffff">
<div class="ncol" style="background:#f0f0f0"></div>
<div class="ticon"><svg width="20" height="20" viewBox="0 0 20 20"><rect x="0" y="0" width="19.5" height="19.5" rx="0.8" fill="#00bcd4"/><rect x="5.5" y="5.5" width="14" height="14" fill="#a6d2f6"/><rect x="6.2" y="6.2" width="3.1" height="3.1" fill="#f3f4f6"/><rect x="6.2" y="10.8" width="3.1" height="3.1" fill="#f3f4f6"/><rect x="6.2" y="15.4" width="3.1" height="3.1" fill="#f3f4f6"/><rect x="10.8" y="6.2" width="3.1" height="3.1" fill="#f3f4f6"/><rect x="10.8" y="10.8" width="3.1" height="3.1" fill="#f3f4f6"/><rect x="10.8" y="15.4" width="3.1" height="3.1" fill="#f3f4f6"/><rect x="15.4" y="6.2" width="3.1" height="3.1" fill="#f3f4f6"/><rect x="15.4" y="10.8" width="3.1" height="3.1" fill="#f3f4f6"/><rect x="15.4" y="15.4" width="3.1" height="3.1" fill="#f3f4f6"/><path d="M5.2 0V19.5M9.8 0V5.5M14.3 0V5.5M0 9.4H5.5M0 14H5.5M0 5.3H19.5" stroke="#00a3b8" stroke-width="0.9"/></svg></div>
<div class="c" style="left:33px">brutal_banking<span style="letter-spacing:-1.2px">...</span></div>
<div class="c" style="left:160px">2</div>
<div class="bar" style="left:239px;width:12.0px"></div>
<div class="c sz" style="left:240.5px">16.0 KiB</div>
<div class="c dt" style="left:337px">2023-11-03 14:14:30</div>
<div class="c dt" style="left:486px"></div>
<div class="c" style="left:637px">InnoDB</div>
<div class="c" style="left:849px">Table</div>
</div>
<div class="row" style="top:298px;background:#ffffff">
<div class="ncol" style="background:#f0f0f0"></div>
<div class="ticon"><svg width="20" height="20" viewBox="0 0 20 20"><rect x="0" y="0" width="19.5" height="19.5" rx="0.8" fill="#00bcd4"/><rect x="5.5" y="5.5" width="14" height="14" fill="#a6d2f6"/><rect x="6.2" y="6.2" width="3.1" height="3.1" fill="#f3f4f6"/><rect x="6.2" y="10.8" width="3.1" height="3.1" fill="#f3f4f6"/><rect x="6.2" y="15.4" width="3.1" height="3.1" fill="#f3f4f6"/><rect x="10.8" y="6.2" width="3.1" height="3.1" fill="#f3f4f6"/><rect x="10.8" y="10.8" width="3.1" height="3.1" fill="#f3f4f6"/><rect x="10.8" y="15.4" width="3.1" height="3.1" fill="#f3f4f6"/><rect x="15.4" y="6.2" width="3.1" height="3.1" fill="#f3f4f6"/><rect x="15.4" y="10.8" width="3.1" height="3.1" fill="#f3f4f6"/><rect x="15.4" y="15.4" width="3.1" height="3.1" fill="#f3f4f6"/><path d="M5.2 0V19.5M9.8 0V5.5M14.3 0V5.5M0 9.4H5.5M0 14H5.5M0 5.3H19.5" stroke="#00a3b8" stroke-width="0.9"/></svg></div>
<div class="c" style="left:33px">brutal_billing</div>
<div class="bar" style="left:151px;width:1.5px"></div>
<div class="c" style="left:160px">7</div>
<div class="bar" style="left:239px;width:12.0px"></div>
<div class="c sz" style="left:240.5px">16.0 KiB</div>
<div class="c dt" style="left:337px">2024-06-13 09:10:55</div>
<div class="c dt" style="left:486px">2025-10-01 21:45:12</div>
<div class="c" style="left:637px">InnoDB</div>
<div class="c" style="left:849px">Table</div>
</div>
<div class="row" style="top:325px;background:#ffffff">
<div class="ncol" style="background:#f0f0f0"></div>
<div class="ticon"><svg width="20" height="20" viewBox="0 0 20 20"><rect x="0" y="0" width="19.5" height="19.5" rx="0.8" fill="#00bcd4"/><rect x="5.5" y="5.5" width="14" height="14" fill="#a6d2f6"/><rect x="6.2" y="6.2" width="3.1" height="3.1" fill="#f3f4f6"/><rect x="6.2" y="10.8" width="3.1" height="3.1" fill="#f3f4f6"/><rect x="6.2" y="15.4" width="3.1" height="3.1" fill="#f3f4f6"/><rect x="10.8" y="6.2" width="3.1" height="3.1" fill="#f3f4f6"/><rect x="10.8" y="10.8" width="3.1" height="3.1" fill="#f3f4f6"/><rect x="10.8" y="15.4" width="3.1" height="3.1" fill="#f3f4f6"/><rect x="15.4" y="6.2" width="3.1" height="3.1" fill="#f3f4f6"/><rect x="15.4" y="10.8" width="3.1" height="3.1" fill="#f3f4f6"/><rect x="15.4" y="15.4" width="3.1" height="3.1" fill="#f3f4f6"/><path d="M5.2 0V19.5M9.8 0V5.5M14.3 0V5.5M0 9.4H5.5M0 14H5.5M0 5.3H19.5" stroke="#00a3b8" stroke-width="0.9"/></svg></div>
<div class="c" style="left:33px">brutal_drugs</div>
<div class="bar" style="left:151px;width:1.5px"></div>
<div class="c" style="left:160px">4</div>
<div class="bar" style="left:239px;width:24.0px"></div>
<div class="c sz" style="left:240.5px">32.0 KiB</div>
<div class="c dt" style="left:337px">2025-05-19 11:37:27</div>
<div class="c dt" style="left:486px">2025-09-29 09:15:05</div>
<div class="c" style="left:637px">InnoDB</div>
<div class="c" style="left:849px">Table</div>
</div>
<div class="row" style="top:352px;background:#ffffff">
<div class="ncol" style="background:#f0f0f0"></div>
<div class="ticon"><svg width="20" height="20" viewBox="0 0 20 20"><rect x="0" y="0" width="19.5" height="19.5" rx="0.8" fill="#00bcd4"/><rect x="5.5" y="5.5" width="14" height="14" fill="#a6d2f6"/><rect x="6.2" y="6.2" width="3.1" height="3.1" fill="#f3f4f6"/><rect x="6.2" y="10.8" width="3.1" height="3.1" fill="#f3f4f6"/><rect x="6.2" y="15.4" width="3.1" height="3.1" fill="#f3f4f6"/><rect x="10.8" y="6.2" width="3.1" height="3.1" fill="#f3f4f6"/><rect x="10.8" y="10.8" width="3.1" height="3.1" fill="#f3f4f6"/><rect x="10.8" y="15.4" width="3.1" height="3.1" fill="#f3f4f6"/><rect x="15.4" y="6.2" width="3.1" height="3.1" fill="#f3f4f6"/><rect x="15.4" y="10.8" width="3.1" height="3.1" fill="#f3f4f6"/><rect x="15.4" y="15.4" width="3.1" height="3.1" fill="#f3f4f6"/><path d="M5.2 0V19.5M9.8 0V5.5M14.3 0V5.5M0 9.4H5.5M0 14H5.5M0 5.3H19.5" stroke="#00a3b8" stroke-width="0.9"/></svg></div>
<div class="c" style="left:33px">brutal_gangs</div>
<div class="bar" style="left:151px;width:1.5px"></div>
<div class="c" style="left:160px">3</div>
<div class="bar" style="left:239px;width:24.0px"></div>
<div class="c sz" style="left:240.5px">32.0 KiB</div>
<div class="c dt" style="left:337px">2024-09-19 10:39:22</div>
<div class="c dt" style="left:486px">2025-09-13 13:56:45</div>
<div class="c" style="left:637px">InnoDB</div>
<div class="c" style="left:849px">Table</div>
</div>
<div class="row" style="top:379px;background:#ffffff">
<div class="ncol" style="background:#f0f0f0"></div>
<div class="ticon"><svg width="20" height="20" viewBox="0 0 20 20"><rect x="0" y="0" width="19.5" height="19.5" rx="0.8" fill="#00bcd4"/><rect x="5.5" y="5.5" width="14" height="14" fill="#a6d2f6"/><rect x="6.2" y="6.2" width="3.1" height="3.1" fill="#f3f4f6"/><rect x="6.2" y="10.8" width="3.1" height="3.1" fill="#f3f4f6"/><rect x="6.2" y="15.4" width="3.1" height="3.1" fill="#f3f4f6"/><rect x="10.8" y="6.2" width="3.1" height="3.1" fill="#f3f4f6"/><rect x="10.8" y="10.8" width="3.1" height="3.1" fill="#f3f4f6"/><rect x="10.8" y="15.4" width="3.1" height="3.1" fill="#f3f4f6"/><rect x="15.4" y="6.2" width="3.1" height="3.1" fill="#f3f4f6"/><rect x="15.4" y="10.8" width="3.1" height="3.1" fill="#f3f4f6"/><rect x="15.4" y="15.4" width="3.1" height="3.1" fill="#f3f4f6"/><path d="M5.2 0V19.5M9.8 0V5.5M14.3 0V5.5M0 9.4H5.5M0 14H5.5M0 5.3H19.5" stroke="#00a3b8" stroke-width="0.9"/></svg></div>
<div class="c" style="left:33px">brutal_housing</div>
<div class="bar" style="left:151px;width:7.2px"></div>
<div class="c" style="left:160px">40</div>
<div class="bar" style="left:239px;width:72.0px"></div>
<div class="c sz" style="left:240.5px">96.0 KiB</div>
<div class="c dt" style="left:337px">2025-04-16 10:24:01</div>
<div class="c dt" style="left:486px">2025-09-29 09:15:09</div>
<div class="c" style="left:637px">InnoDB</div>
<div class="c" style="left:849px">Table</div>
</div>
<div class="row" style="top:406px;background:#ffffff">
<div class="ncol" style="background:#f0f0f0"></div>
<div class="ticon"><svg width="20" height="20" viewBox="0 0 20 20"><rect x="0" y="0" width="19.5" height="19.5" rx="0.8" fill="#00bcd4"/><rect x="5.5" y="5.5" width="14" height="14" fill="#a6d2f6"/><rect x="6.2" y="6.2" width="3.1" height="3.1" fill="#f3f4f6"/><rect x="6.2" y="10.8" width="3.1" height="3.1" fill="#f3f4f6"/><rect x="6.2" y="15.4" width="3.1" height="3.1" fill="#f3f4f6"/><rect x="10.8" y="6.2" width="3.1" height="3.1" fill="#f3f4f6"/><rect x="10.8" y="10.8" width="3.1" height="3.1" fill="#f3f4f6"/><rect x="10.8" y="15.4" width="3.1" height="3.1" fill="#f3f4f6"/><rect x="15.4" y="6.2" width="3.1" height="3.1" fill="#f3f4f6"/><rect x="15.4" y="10.8" width="3.1" height="3.1" fill="#f3f4f6"/><rect x="15.4" y="15.4" width="3.1" height="3.1" fill="#f3f4f6"/><path d="M5.2 0V19.5M9.8 0V5.5M14.3 0V5.5M0 9.4H5.5M0 14H5.5M0 5.3H19.5" stroke="#00a3b8" stroke-width="0.9"/></svg></div>
<div class="c" style="left:33px">brutal_housing<span style="letter-spacing:-1.2px">...</span></div>
<div class="c" style="left:160px">2</div>
<div class="bar" style="left:239px;width:24.0px"></div>
<div class="c sz" style="left:240.5px">32.0 KiB</div>
<div class="c dt" style="left:337px">2025-02-28 11:54:44</div>
<div class="c dt" style="left:486px"></div>
<div class="c" style="left:637px">InnoDB</div>
<div class="c" style="left:849px">Table</div>
</div>
<div class="row" style="top:433px;background:#e5f3ff">
<div class="ncol" style="background:#dae8f5"></div>
<div class="ticon"><svg width="20" height="20" viewBox="0 0 20 20"><rect x="0" y="0" width="19.5" height="19.5" rx="0.8" fill="#00bcd4"/><rect x="5.5" y="5.5" width="14" height="14" fill="#a6d2f6"/><rect x="6.2" y="6.2" width="3.1" height="3.1" fill="#f3f4f6"/><rect x="6.2" y="10.8" width="3.1" height="3.1" fill="#f3f4f6"/><rect x="6.2" y="15.4" width="3.1" height="3.1" fill="#f3f4f6"/><rect x="10.8" y="6.2" width="3.1" height="3.1" fill="#f3f4f6"/><rect x="10.8" y="10.8" width="3.1" height="3.1" fill="#f3f4f6"/><rect x="10.8" y="15.4" width="3.1" height="3.1" fill="#f3f4f6"/><rect x="15.4" y="6.2" width="3.1" height="3.1" fill="#f3f4f6"/><rect x="15.4" y="10.8" width="3.1" height="3.1" fill="#f3f4f6"/><rect x="15.4" y="15.4" width="3.1" height="3.1" fill="#f3f4f6"/><path d="M5.2 0V19.5M9.8 0V5.5M14.3 0V5.5M0 9.4H5.5M0 14H5.5M0 5.3H19.5" stroke="#00a3b8" stroke-width="0.9"/></svg></div>
<div class="c" style="left:33px">brutal_housing<span style="letter-spacing:-1.2px">...</span></div>
<div class="c" style="left:160px">2</div>
<div class="bar" style="left:239px;width:36.0px"></div>
<div class="c sz" style="left:240.5px">48.0 KiB</div>
<div class="c dt" style="left:337px">2025-04-16 10:24:01</div>
<div class="c dt" style="left:486px">2025-09-29 09:15:09</div>
<div class="c" style="left:637px">InnoDB</div>
<div class="c" style="left:849px">Table</div>
</div>
<div class="row" style="top:460px;background:#ffffff">
<div class="ncol" style="background:#f0f0f0"></div>
<div class="ticon"><svg width="20" height="20" viewBox="0 0 20 20"><rect x="0" y="0" width="19.5" height="19.5" rx="0.8" fill="#00bcd4"/><rect x="5.5" y="5.5" width="14" height="14" fill="#a6d2f6"/><rect x="6.2" y="6.2" width="3.1" height="3.1" fill="#f3f4f6"/><rect x="6.2" y="10.8" width="3.1" height="3.1" fill="#f3f4f6"/><rect x="6.2" y="15.4" width="3.1" height="3.1" fill="#f3f4f6"/><rect x="10.8" y="6.2" width="3.1" height="3.1" fill="#f3f4f6"/><rect x="10.8" y="10.8" width="3.1" height="3.1" fill="#f3f4f6"/><rect x="10.8" y="15.4" width="3.1" height="3.1" fill="#f3f4f6"/><rect x="15.4" y="6.2" width="3.1" height="3.1" fill="#f3f4f6"/><rect x="15.4" y="10.8" width="3.1" height="3.1" fill="#f3f4f6"/><rect x="15.4" y="15.4" width="3.1" height="3.1" fill="#f3f4f6"/><path d="M5.2 0V19.5M9.8 0V5.5M14.3 0V5.5M0 9.4H5.5M0 14H5.5M0 5.3H19.5" stroke="#00a3b8" stroke-width="0.9"/></svg></div>
<div class="c" style="left:33px">brutal_hunting</div>
<div class="bar" style="left:151px;width:3.1px"></div>
<div class="c" style="left:160px">17</div>
<div class="bar" style="left:239px;width:12.0px"></div>
<div class="c sz" style="left:240.5px">16.0 KiB</div>
<div class="c dt" style="left:337px">2023-11-09 20:00:40</div>
<div class="c dt" style="left:486px"></div>
<div class="c" style="left:637px">InnoDB</div>
<div class="c" style="left:849px">Table</div>
</div>
<div class="row" style="top:487px;background:#ffffff">
<div class="ncol" style="background:#f0f0f0"></div>
<div class="ticon"><svg width="20" height="20" viewBox="0 0 20 20"><rect x="0" y="0" width="19.5" height="19.5" rx="0.8" fill="#00bcd4"/><rect x="5.5" y="5.5" width="14" height="14" fill="#a6d2f6"/><rect x="6.2" y="6.2" width="3.1" height="3.1" fill="#f3f4f6"/><rect x="6.2" y="10.8" width="3.1" height="3.1" fill="#f3f4f6"/><rect x="6.2" y="15.4" width="3.1" height="3.1" fill="#f3f4f6"/><rect x="10.8" y="6.2" width="3.1" height="3.1" fill="#f3f4f6"/><rect x="10.8" y="10.8" width="3.1" height="3.1" fill="#f3f4f6"/><rect x="10.8" y="15.4" width="3.1" height="3.1" fill="#f3f4f6"/><rect x="15.4" y="6.2" width="3.1" height="3.1" fill="#f3f4f6"/><rect x="15.4" y="10.8" width="3.1" height="3.1" fill="#f3f4f6"/><rect x="15.4" y="15.4" width="3.1" height="3.1" fill="#f3f4f6"/><path d="M5.2 0V19.5M9.8 0V5.5M14.3 0V5.5M0 9.4H5.5M0 14H5.5M0 5.3H19.5" stroke="#00a3b8" stroke-width="0.9"/></svg></div>
<div class="c" style="left:33px">brutal_keys</div>
<div class="bar" style="left:151px;width:1.5px"></div>
<div class="c" style="left:160px">8</div>
<div class="bar" style="left:239px;width:24.0px"></div>
<div class="c sz" style="left:240.5px">32.0 KiB</div>
<div class="c dt" style="left:337px">2025-03-23 17:31:00</div>
<div class="c dt" style="left:486px">2025-10-02 12:04:58</div>
<div class="c" style="left:637px">InnoDB</div>
<div class="c" style="left:849px">Table</div>
</div>
<div class="row" style="top:514px;background:#ffffff">
<div class="ncol" style="background:#f0f0f0"></div>
<div class="ticon"><svg width="20" height="20" viewBox="0 0 20 20"><rect x="0" y="0" width="19.5" height="19.5" rx="0.8" fill="#00bcd4"/><rect x="5.5" y="5.5" width="14" height="14" fill="#a6d2f6"/><rect x="6.2" y="6.2" width="3.1" height="3.1" fill="#f3f4f6"/><rect x="6.2" y="10.8" width="3.1" height="3.1" fill="#f3f4f6"/><rect x="6.2" y="15.4" width="3.1" height="3.1" fill="#f3f4f6"/><rect x="10.8" y="6.2" width="3.1" height="3.1" fill="#f3f4f6"/><rect x="10.8" y="10.8" width="3.1" height="3.1" fill="#f3f4f6"/><rect x="10.8" y="15.4" width="3.1" height="3.1" fill="#f3f4f6"/><rect x="15.4" y="6.2" width="3.1" height="3.1" fill="#f3f4f6"/><rect x="15.4" y="10.8" width="3.1" height="3.1" fill="#f3f4f6"/><rect x="15.4" y="15.4" width="3.1" height="3.1" fill="#f3f4f6"/><path d="M5.2 0V19.5M9.8 0V5.5M14.3 0V5.5M0 9.4H5.5M0 14H5.5M0 5.3H19.5" stroke="#00a3b8" stroke-width="0.9"/></svg></div>
<div class="c" style="left:33px">brutal_ped_con<span style="letter-spacing:-1.2px">...</span></div>
<div class="c" style="left:160px">0</div>
<div class="bar" style="left:239px;width:12.0px"></div>
<div class="c sz" style="left:240.5px">16.0 KiB</div>
<div class="c dt" style="left:337px">2025-08-07 10:20:42</div>
<div class="c dt" style="left:486px"></div>
<div class="c" style="left:637px">InnoDB</div>
<div class="c" style="left:849px">Table</div>
</div>
<div class="row" style="top:541px;background:#ffffff">
<div class="ncol" style="background:#f0f0f0"></div>
<div class="ticon"><svg width="20" height="20" viewBox="0 0 20 20"><rect x="0" y="0" width="19.5" height="19.5" rx="0.8" fill="#00bcd4"/><rect x="5.5" y="5.5" width="14" height="14" fill="#a6d2f6"/><rect x="6.2" y="6.2" width="3.1" height="3.1" fill="#f3f4f6"/><rect x="6.2" y="10.8" width="3.1" height="3.1" fill="#f3f4f6"/><rect x="6.2" y="15.4" width="3.1" height="3.1" fill="#f3f4f6"/><rect x="10.8" y="6.2" width="3.1" height="3.1" fill="#f3f4f6"/><rect x="10.8" y="10.8" width="3.1" height="3.1" fill="#f3f4f6"/><rect x="10.8" y="15.4" width="3.1" height="3.1" fill="#f3f4f6"/><rect x="15.4" y="6.2" width="3.1" height="3.1" fill="#f3f4f6"/><rect x="15.4" y="10.8" width="3.1" height="3.1" fill="#f3f4f6"/><rect x="15.4" y="15.4" width="3.1" height="3.1" fill="#f3f4f6"/><path d="M5.2 0V19.5M9.8 0V5.5M14.3 0V5.5M0 9.4H5.5M0 14H5.5M0 5.3H19.5" stroke="#00a3b8" stroke-width="0.9"/></svg></div>
<div class="c" style="left:33px">brutal_pets</div>
<div class="c" style="left:160px">0</div>
<div class="bar" style="left:239px;width:12.0px"></div>
<div class="c sz" style="left:240.5px">16.0 KiB</div>
<div class="c dt" style="left:337px">2023-10-05 20:01:31</div>
<div class="c dt" style="left:486px"></div>
<div class="c" style="left:637px">InnoDB</div>
<div class="c" style="left:849px">Table</div>
</div>
<div class="row" style="top:568px;background:#ffffff">
<div class="ncol" style="background:#f0f0f0"></div>
<div class="ticon"><svg width="20" height="20" viewBox="0 0 20 20"><rect x="0" y="0" width="19.5" height="19.5" rx="0.8" fill="#00bcd4"/><rect x="5.5" y="5.5" width="14" height="14" fill="#a6d2f6"/><rect x="6.2" y="6.2" width="3.1" height="3.1" fill="#f3f4f6"/><rect x="6.2" y="10.8" width="3.1" height="3.1" fill="#f3f4f6"/><rect x="6.2" y="15.4" width="3.1" height="3.1" fill="#f3f4f6"/><rect x="10.8" y="6.2" width="3.1" height="3.1" fill="#f3f4f6"/><rect x="10.8" y="10.8" width="3.1" height="3.1" fill="#f3f4f6"/><rect x="10.8" y="15.4" width="3.1" height="3.1" fill="#f3f4f6"/><rect x="15.4" y="6.2" width="3.1" height="3.1" fill="#f3f4f6"/><rect x="15.4" y="10.8" width="3.1" height="3.1" fill="#f3f4f6"/><rect x="15.4" y="15.4" width="3.1" height="3.1" fill="#f3f4f6"/><path d="M5.2 0V19.5M9.8 0V5.5M14.3 0V5.5M0 9.4H5.5M0 14H5.5M0 5.3H19.5" stroke="#00a3b8" stroke-width="0.9"/></svg></div>
<div class="c" style="left:33px">brutal_pets_bus<span style="letter-spacing:-1.2px">...</span></div>
<div class="c" style="left:160px">1</div>
<div class="bar" style="left:239px;width:12.0px"></div>
<div class="c sz" style="left:240.5px">16.0 KiB</div>
<div class="c dt" style="left:337px">2023-10-28 15:14:12</div>
<div class="c dt" style="left:486px"></div>
<div class="c" style="left:637px">InnoDB</div>
<div class="c" style="left:849px">Table</div>
</div>
<div class="row" style="top:595px;background:#ffffff">
<div class="ncol" style="background:#f0f0f0"></div>
<div class="ticon"><svg width="20" height="20" viewBox="0 0 20 20"><rect x="0" y="0" width="19.5" height="19.5" rx="0.8" fill="#00bcd4"/><rect x="5.5" y="5.5" width="14" height="14" fill="#a6d2f6"/><rect x="6.2" y="6.2" width="3.1" height="3.1" fill="#f3f4f6"/><rect x="6.2" y="10.8" width="3.1" height="3.1" fill="#f3f4f6"/><rect x="6.2" y="15.4" width="3.1" height="3.1" fill="#f3f4f6"/><rect x="10.8" y="6.2" width="3.1" height="3.1" fill="#f3f4f6"/><rect x="10.8" y="10.8" width="3.1" height="3.1" fill="#f3f4f6"/><rect x="10.8" y="15.4" width="3.1" height="3.1" fill="#f3f4f6"/><rect x="15.4" y="6.2" width="3.1" height="3.1" fill="#f3f4f6"/><rect x="15.4" y="10.8" width="3.1" height="3.1" fill="#f3f4f6"/><rect x="15.4" y="15.4" width="3.1" height="3.1" fill="#f3f4f6"/><path d="M5.2 0V19.5M9.8 0V5.5M14.3 0V5.5M0 9.4H5.5M0 14H5.5M0 5.3H19.5" stroke="#00a3b8" stroke-width="0.9"/></svg></div>
<div class="c" style="left:33px">brutal_policejo<span style="letter-spacing:-1.2px">...</span></div>
<div class="c" style="left:160px">0</div>
<div class="bar" style="left:239px;width:12.0px"></div>
<div class="c sz" style="left:240.5px">16.0 KiB</div>
<div class="c dt" style="left:337px">2024-03-18 21:23:37</div>
<div class="c dt" style="left:486px"></div>
<div class="c" style="left:637px">InnoDB</div>
<div class="c" style="left:849px">Table</div>
</div>
<div class="row" style="top:622px;background:#ffffff">
<div class="ncol" style="background:#f0f0f0"></div>
<div class="ticon"><svg width="20" height="20" viewBox="0 0 20 20"><rect x="0" y="0" width="19.5" height="19.5" rx="0.8" fill="#00bcd4"/><rect x="5.5" y="5.5" width="14" height="14" fill="#a6d2f6"/><rect x="6.2" y="6.2" width="3.1" height="3.1" fill="#f3f4f6"/><rect x="6.2" y="10.8" width="3.1" height="3.1" fill="#f3f4f6"/><rect x="6.2" y="15.4" width="3.1" height="3.1" fill="#f3f4f6"/><rect x="10.8" y="6.2" width="3.1" height="3.1" fill="#f3f4f6"/><rect x="10.8" y="10.8" width="3.1" height="3.1" fill="#f3f4f6"/><rect x="10.8" y="15.4" width="3.1" height="3.1" fill="#f3f4f6"/><rect x="15.4" y="6.2" width="3.1" height="3.1" fill="#f3f4f6"/><rect x="15.4" y="10.8" width="3.1" height="3.1" fill="#f3f4f6"/><rect x="15.4" y="15.4" width="3.1" height="3.1" fill="#f3f4f6"/><path d="M5.2 0V19.5M9.8 0V5.5M14.3 0V5.5M0 9.4H5.5M0 14H5.5M0 5.3H19.5" stroke="#00a3b8" stroke-width="0.9"/></svg></div>
<div class="c" style="left:33px">brutal_premiu<span style="letter-spacing:-1.2px">...</span></div>
<div class="bar" style="left:151px;width:1.5px"></div>
<div class="c" style="left:160px">3</div>
<div class="bar" style="left:239px;width:12.0px"></div>
<div class="c sz" style="left:240.5px">16.0 KiB</div>
<div class="c dt" style="left:337px">2025-09-15 11:51:49</div>
<div class="c dt" style="left:486px">2025-10-02 12:18:45</div>
<div class="c" style="left:637px">InnoDB</div>
<div class="c" style="left:849px">Table</div>
</div>
<div class="row" style="top:649px;background:#ffffff">
<div class="ncol" style="background:#f0f0f0"></div>
<div class="ticon"><svg width="20" height="20" viewBox="0 0 20 20"><rect x="0" y="0" width="19.5" height="19.5" rx="0.8" fill="#00bcd4"/><rect x="5.5" y="5.5" width="14" height="14" fill="#a6d2f6"/><rect x="6.2" y="6.2" width="3.1" height="3.1" fill="#f3f4f6"/><rect x="6.2" y="10.8" width="3.1" height="3.1" fill="#f3f4f6"/><rect x="6.2" y="15.4" width="3.1" height="3.1" fill="#f3f4f6"/><rect x="10.8" y="6.2" width="3.1" height="3.1" fill="#f3f4f6"/><rect x="10.8" y="10.8" width="3.1" height="3.1" fill="#f3f4f6"/><rect x="10.8" y="15.4" width="3.1" height="3.1" fill="#f3f4f6"/><rect x="15.4" y="6.2" width="3.1" height="3.1" fill="#f3f4f6"/><rect x="15.4" y="10.8" width="3.1" height="3.1" fill="#f3f4f6"/><rect x="15.4" y="15.4" width="3.1" height="3.1" fill="#f3f4f6"/><path d="M5.2 0V19.5M9.8 0V5.5M14.3 0V5.5M0 9.4H5.5M0 14H5.5M0 5.3H19.5" stroke="#00a3b8" stroke-width="0.9"/></svg></div>
<div class="c" style="left:33px">brutal_premiu<span style="letter-spacing:-1.2px">...</span></div>
<div class="bar" style="left:151px;width:3.9px"></div>
<div class="c" style="left:160px">22</div>
<div class="bar" style="left:239px;width:24.0px"></div>
<div class="c sz" style="left:240.5px">32.0 KiB</div>
<div class="c dt" style="left:337px">2025-09-30 13:15:36</div>
<div class="c dt" style="left:486px">2025-10-02 12:19:06</div>
<div class="c" style="left:637px">InnoDB</div>
<div class="c" style="left:849px">Table</div>
</div>
<div class="row" style="top:676px;background:#ffffff">
<div class="ncol" style="background:#f0f0f0"></div>
<div class="ticon"><svg width="20" height="20" viewBox="0 0 20 20"><rect x="0" y="0" width="19.5" height="19.5" rx="0.8" fill="#00bcd4"/><rect x="5.5" y="5.5" width="14" height="14" fill="#a6d2f6"/><rect x="6.2" y="6.2" width="3.1" height="3.1" fill="#f3f4f6"/><rect x="6.2" y="10.8" width="3.1" height="3.1" fill="#f3f4f6"/><rect x="6.2" y="15.4" width="3.1" height="3.1" fill="#f3f4f6"/><rect x="10.8" y="6.2" width="3.1" height="3.1" fill="#f3f4f6"/><rect x="10.8" y="10.8" width="3.1" height="3.1" fill="#f3f4f6"/><rect x="10.8" y="15.4" width="3.1" height="3.1" fill="#f3f4f6"/><rect x="15.4" y="6.2" width="3.1" height="3.1" fill="#f3f4f6"/><rect x="15.4" y="10.8" width="3.1" height="3.1" fill="#f3f4f6"/><rect x="15.4" y="15.4" width="3.1" height="3.1" fill="#f3f4f6"/><path d="M5.2 0V19.5M9.8 0V5.5M14.3 0V5.5M0 9.4H5.5M0 14H5.5M0 5.3H19.5" stroke="#00a3b8" stroke-width="0.9"/></svg></div>
<div class="c" style="left:33px">brutal_skills</div>
<div class="bar" style="left:151px;width:4.3px"></div>
<div class="c" style="left:160px">24</div>
<div class="bar" style="left:239px;width:12.0px"></div>
<div class="c sz" style="left:240.5px">16.0 KiB</div>
<div class="c dt" style="left:337px">2023-10-01 16:34:22</div>
<div class="c dt" style="left:486px">2025-10-01 11:30:08</div>
<div class="c" style="left:637px">InnoDB</div>
<div class="c" style="left:849px">Table</div>
</div>
<div class="row" style="top:703px;background:#ffffff">
<div class="ncol" style="background:#f0f0f0"></div>
<div class="ticon"><svg width="20" height="20" viewBox="0 0 20 20"><rect x="0" y="0" width="19.5" height="19.5" rx="0.8" fill="#00bcd4"/><rect x="5.5" y="5.5" width="14" height="14" fill="#a6d2f6"/><rect x="6.2" y="6.2" width="3.1" height="3.1" fill="#f3f4f6"/><rect x="6.2" y="10.8" width="3.1" height="3.1" fill="#f3f4f6"/><rect x="6.2" y="15.4" width="3.1" height="3.1" fill="#f3f4f6"/><rect x="10.8" y="6.2" width="3.1" height="3.1" fill="#f3f4f6"/><rect x="10.8" y="10.8" width="3.1" height="3.1" fill="#f3f4f6"/><rect x="10.8" y="15.4" width="3.1" height="3.1" fill="#f3f4f6"/><rect x="15.4" y="6.2" width="3.1" height="3.1" fill="#f3f4f6"/><rect x="15.4" y="10.8" width="3.1" height="3.1" fill="#f3f4f6"/><rect x="15.4" y="15.4" width="3.1" height="3.1" fill="#f3f4f6"/><path d="M5.2 0V19.5M9.8 0V5.5M14.3 0V5.5M0 9.4H5.5M0 14H5.5M0 5.3H19.5" stroke="#00a3b8" stroke-width="0.9"/></svg></div>
<div class="c" style="left:33px">cardealer_vehic<span style="letter-spacing:-1.2px">...</span></div>
<div class="c" style="left:160px">0</div>
<div class="bar" style="left:239px;width:12.0px"></div>
<div class="c sz" style="left:240.5px">16.0 KiB</div>
<div class="c dt" style="left:337px">2023-09-16 12:39:14</div>
<div class="c dt" style="left:486px"></div>
<div class="c" style="left:637px">InnoDB</div>
<div class="c" style="left:849px">Table</div>
</div>
<div class="row" style="top:730px;background:#ffffff">
<div class="ncol" style="background:#f0f0f0"></div>
<div class="ticon"><svg width="20" height="20" viewBox="0 0 20 20"><rect x="0" y="0" width="19.5" height="19.5" rx="0.8" fill="#00bcd4"/><rect x="5.5" y="5.5" width="14" height="14" fill="#a6d2f6"/><rect x="6.2" y="6.2" width="3.1" height="3.1" fill="#f3f4f6"/><rect x="6.2" y="10.8" width="3.1" height="3.1" fill="#f3f4f6"/><rect x="6.2" y="15.4" width="3.1" height="3.1" fill="#f3f4f6"/><rect x="10.8" y="6.2" width="3.1" height="3.1" fill="#f3f4f6"/><rect x="10.8" y="10.8" width="3.1" height="3.1" fill="#f3f4f6"/><rect x="10.8" y="15.4" width="3.1" height="3.1" fill="#f3f4f6"/><rect x="15.4" y="6.2" width="3.1" height="3.1" fill="#f3f4f6"/><rect x="15.4" y="10.8" width="3.1" height="3.1" fill="#f3f4f6"/><rect x="15.4" y="15.4" width="3.1" height="3.1" fill="#f3f4f6"/><path d="M5.2 0V19.5M9.8 0V5.5M14.3 0V5.5M0 9.4H5.5M0 14H5.5M0 5.3H19.5" stroke="#00a3b8" stroke-width="0.9"/></svg></div>
<div class="c" style="left:33px">codem_billing</div>
<div class="c" style="left:160px">0</div>
<div class="bar" style="left:239px;width:24.0px"></div>
<div class="c sz" style="left:240.5px">32.0 KiB</div>
<div class="c dt" style="left:337px">2024-01-18 19:20:37</div>
<div class="c dt" style="left:486px"></div>
<div class="c" style="left:637px">InnoDB</div>
<div class="c" style="left:849px">Table</div>
</div>
<div class="row" style="top:757px;background:#ffffff">
<div class="ncol" style="background:#f0f0f0"></div>
<div class="ticon"><svg width="20" height="20" viewBox="0 0 20 20"><rect x="0" y="0" width="19.5" height="19.5" rx="0.8" fill="#00bcd4"/><rect x="5.5" y="5.5" width="14" height="14" fill="#a6d2f6"/><rect x="6.2" y="6.2" width="3.1" height="3.1" fill="#f3f4f6"/><rect x="6.2" y="10.8" width="3.1" height="3.1" fill="#f3f4f6"/><rect x="6.2" y="15.4" width="3.1" height="3.1" fill="#f3f4f6"/><rect x="10.8" y="6.2" width="3.1" height="3.1" fill="#f3f4f6"/><rect x="10.8" y="10.8" width="3.1" height="3.1" fill="#f3f4f6"/><rect x="10.8" y="15.4" width="3.1" height="3.1" fill="#f3f4f6"/><rect x="15.4" y="6.2" width="3.1" height="3.1" fill="#f3f4f6"/><rect x="15.4" y="10.8" width="3.1" height="3.1" fill="#f3f4f6"/><rect x="15.4" y="15.4" width="3.1" height="3.1" fill="#f3f4f6"/><path d="M5.2 0V19.5M9.8 0V5.5M14.3 0V5.5M0 9.4H5.5M0 14H5.5M0 5.3H19.5" stroke="#00a3b8" stroke-width="0.9"/></svg></div>
<div class="c" style="left:33px">datastore</div>
<div class="bar" style="left:151px;width:1.6px"></div>
<div class="c" style="left:160px">9</div>
<div class="bar" style="left:239px;width:12.0px"></div>
<div class="c sz" style="left:240.5px">16.0 KiB</div>
<div class="c dt" style="left:337px">2023-09-16 12:39:14</div>
<div class="c dt" style="left:486px"></div>
<div class="c" style="left:637px">InnoDB</div>
<div class="c" style="left:849px">Table</div>
</div>
<div class="row" style="top:784px;background:#ffffff">
<div class="ncol" style="background:#f0f0f0"></div>
<div class="ticon"><svg width="20" height="20" viewBox="0 0 20 20"><rect x="0" y="0" width="19.5" height="19.5" rx="0.8" fill="#00bcd4"/><rect x="5.5" y="5.5" width="14" height="14" fill="#a6d2f6"/><rect x="6.2" y="6.2" width="3.1" height="3.1" fill="#f3f4f6"/><rect x="6.2" y="10.8" width="3.1" height="3.1" fill="#f3f4f6"/><rect x="6.2" y="15.4" width="3.1" height="3.1" fill="#f3f4f6"/><rect x="10.8" y="6.2" width="3.1" height="3.1" fill="#f3f4f6"/><rect x="10.8" y="10.8" width="3.1" height="3.1" fill="#f3f4f6"/><rect x="10.8" y="15.4" width="3.1" height="3.1" fill="#f3f4f6"/><rect x="15.4" y="6.2" width="3.1" height="3.1" fill="#f3f4f6"/><rect x="15.4" y="10.8" width="3.1" height="3.1" fill="#f3f4f6"/><rect x="15.4" y="15.4" width="3.1" height="3.1" fill="#f3f4f6"/><path d="M5.2 0V19.5M9.8 0V5.5M14.3 0V5.5M0 9.4H5.5M0 14H5.5M0 5.3H19.5" stroke="#00a3b8" stroke-width="0.9"/></svg></div>
<div class="c" style="left:33px">datastore_data</div>
<div class="bar" style="left:151px;width:84.0px"></div>
<div class="c" style="left:160px">468</div>
<div class="bar" style="left:239px;width:72.0px"></div>
<div class="c sz" style="left:240.5px">96.0 KiB</div>
<div class="c dt" style="left:337px">2023-09-16 12:39:14</div>
<div class="c dt" style="left:486px"></div>
<div class="c" style="left:637px">InnoDB</div>
<div class="c" style="left:849px">Table</div>
</div>
<div class="row" style="top:811px;background:#ffffff">
<div class="ncol" style="background:#f0f0f0"></div>
<div class="ticon"><svg width="20" height="20" viewBox="0 0 20 20"><rect x="0" y="0" width="19.5" height="19.5" rx="0.8" fill="#00bcd4"/><rect x="5.5" y="5.5" width="14" height="14" fill="#a6d2f6"/><rect x="6.2" y="6.2" width="3.1" height="3.1" fill="#f3f4f6"/><rect x="6.2" y="10.8" width="3.1" height="3.1" fill="#f3f4f6"/><rect x="6.2" y="15.4" width="3.1" height="3.1" fill="#f3f4f6"/><rect x="10.8" y="6.2" width="3.1" height="3.1" fill="#f3f4f6"/><rect x="10.8" y="10.8" width="3.1" height="3.1" fill="#f3f4f6"/><rect x="10.8" y="15.4" width="3.1" height="3.1" fill="#f3f4f6"/><rect x="15.4" y="6.2" width="3.1" height="3.1" fill="#f3f4f6"/><rect x="15.4" y="10.8" width="3.1" height="3.1" fill="#f3f4f6"/><rect x="15.4" y="15.4" width="3.1" height="3.1" fill="#f3f4f6"/><path d="M5.2 0V19.5M9.8 0V5.5M14.3 0V5.5M0 9.4H5.5M0 14H5.5M0 5.3H19.5" stroke="#00a3b8" stroke-width="0.9"/></svg></div>
<div class="c" style="left:33px">dpkeybinds</div>
<div class="bar" style="left:151px;width:4.3px"></div>
<div class="c" style="left:160px">24</div>
<div class="bar" style="left:239px;width:12.0px"></div>
<div class="c sz" style="left:240.5px">16.0 KiB</div>
<div class="c dt" style="left:337px">2023-09-16 17:29:46</div>
<div class="c dt" style="left:486px"></div>
<div class="c" style="left:637px">InnoDB</div>
<div class="c" style="left:849px">Table</div>
</div>
<div class="row" style="top:838px;background:#ffffff">
<div class="ncol" style="background:#f0f0f0"></div>
<div class="ticon"><svg width="20" height="20" viewBox="0 0 20 20"><rect x="0" y="0" width="19.5" height="19.5" rx="0.8" fill="#00bcd4"/><rect x="5.5" y="5.5" width="14" height="14" fill="#a6d2f6"/><rect x="6.2" y="6.2" width="3.1" height="3.1" fill="#f3f4f6"/><rect x="6.2" y="10.8" width="3.1" height="3.1" fill="#f3f4f6"/><rect x="6.2" y="15.4" width="3.1" height="3.1" fill="#f3f4f6"/><rect x="10.8" y="6.2" width="3.1" height="3.1" fill="#f3f4f6"/><rect x="10.8" y="10.8" width="3.1" height="3.1" fill="#f3f4f6"/><rect x="10.8" y="15.4" width="3.1" height="3.1" fill="#f3f4f6"/><rect x="15.4" y="6.2" width="3.1" height="3.1" fill="#f3f4f6"/><rect x="15.4" y="10.8" width="3.1" height="3.1" fill="#f3f4f6"/><rect x="15.4" y="15.4" width="3.1" height="3.1" fill="#f3f4f6"/><path d="M5.2 0V19.5M9.8 0V5.5M14.3 0V5.5M0 9.4H5.5M0 14H5.5M0 5.3H19.5" stroke="#00a3b8" stroke-width="0.9"/></svg></div>
<div class="c" style="left:33px">fine_types</div>
<div class="bar" style="left:151px;width:9.3px"></div>
<div class="c" style="left:160px">52</div>
<div class="bar" style="left:239px;width:12.0px"></div>
<div class="c sz" style="left:240.5px">16.0 KiB</div>
<div class="c dt" style="left:337px">2023-09-16 12:39:15</div>
<div class="c dt" style="left:486px"></div>
<div class="c" style="left:637px">InnoDB</div>
<div class="c" style="left:849px">Table</div>
</div>
<div class="row" style="top:865px;background:#ffffff">
<div class="ncol" style="background:#f0f0f0"></div>
<div class="ticon"><svg width="20" height="20" viewBox="0 0 20 20"><rect x="0" y="0" width="19.5" height="19.5" rx="0.8" fill="#00bcd4"/><rect x="5.5" y="5.5" width="14" height="14" fill="#a6d2f6"/><rect x="6.2" y="6.2" width="3.1" height="3.1" fill="#f3f4f6"/><rect x="6.2" y="10.8" width="3.1" height="3.1" fill="#f3f4f6"/><rect x="6.2" y="15.4" width="3.1" height="3.1" fill="#f3f4f6"/><rect x="10.8" y="6.2" width="3.1" height="3.1" fill="#f3f4f6"/><rect x="10.8" y="10.8" width="3.1" height="3.1" fill="#f3f4f6"/><rect x="10.8" y="15.4" width="3.1" height="3.1" fill="#f3f4f6"/><rect x="15.4" y="6.2" width="3.1" height="3.1" fill="#f3f4f6"/><rect x="15.4" y="10.8" width="3.1" height="3.1" fill="#f3f4f6"/><rect x="15.4" y="15.4" width="3.1" height="3.1" fill="#f3f4f6"/><path d="M5.2 0V19.5M9.8 0V5.5M14.3 0V5.5M0 9.4H5.5M0 14H5.5M0 5.3H19.5" stroke="#00a3b8" stroke-width="0.9"/></svg></div>
<div class="c" style="left:33px">items</div>
<div class="bar" style="left:151px;width:19.4px"></div>
<div class="c" style="left:160px">108</div>
<div class="bar" style="left:239px;width:12.0px"></div>
<div class="c sz" style="left:240.5px">16.0 KiB</div>
<div class="c dt" style="left:337px">2023-09-16 12:39:14</div>
<div class="c dt" style="left:486px"></div>
<div class="c" style="left:637px">InnoDB</div>
<div class="c" style="left:849px">Table</div>
</div>
<div class="row" style="top:892px;background:#ffffff">
<div class="ncol" style="background:#f0f0f0"></div>
<div class="ticon"><svg width="20" height="20" viewBox="0 0 20 20"><rect x="0" y="0" width="19.5" height="19.5" rx="0.8" fill="#00bcd4"/><rect x="5.5" y="5.5" width="14" height="14" fill="#a6d2f6"/><rect x="6.2" y="6.2" width="3.1" height="3.1" fill="#f3f4f6"/><rect x="6.2" y="10.8" width="3.1" height="3.1" fill="#f3f4f6"/><rect x="6.2" y="15.4" width="3.1" height="3.1" fill="#f3f4f6"/><rect x="10.8" y="6.2" width="3.1" height="3.1" fill="#f3f4f6"/><rect x="10.8" y="10.8" width="3.1" height="3.1" fill="#f3f4f6"/><rect x="10.8" y="15.4" width="3.1" height="3.1" fill="#f3f4f6"/><rect x="15.4" y="6.2" width="3.1" height="3.1" fill="#f3f4f6"/><rect x="15.4" y="10.8" width="3.1" height="3.1" fill="#f3f4f6"/><rect x="15.4" y="15.4" width="3.1" height="3.1" fill="#f3f4f6"/><path d="M5.2 0V19.5M9.8 0V5.5M14.3 0V5.5M0 9.4H5.5M0 14H5.5M0 5.3H19.5" stroke="#00a3b8" stroke-width="0.9"/></svg></div>
<div class="c" style="left:33px">job2_grades</div>
<div class="c" style="left:160px">0</div>
<div class="bar" style="left:239px;width:12.0px"></div>
<div class="c sz" style="left:240.5px">16.0 KiB</div>
<div class="c dt" style="left:337px">2024-11-14 10:32:51</div>
<div class="c dt" style="left:486px"></div>
<div class="c" style="left:637px">InnoDB</div>
<div class="c" style="left:849px">Table</div>
</div>
<div class="row" style="top:919px;background:#ffffff">
<div class="ncol" style="background:#f0f0f0"></div>
<div class="ticon"><svg width="20" height="20" viewBox="0 0 20 20"><rect x="0" y="0" width="19.5" height="19.5" rx="0.8" fill="#00bcd4"/><rect x="5.5" y="5.5" width="14" height="14" fill="#a6d2f6"/><rect x="6.2" y="6.2" width="3.1" height="3.1" fill="#f3f4f6"/><rect x="6.2" y="10.8" width="3.1" height="3.1" fill="#f3f4f6"/><rect x="6.2" y="15.4" width="3.1" height="3.1" fill="#f3f4f6"/><rect x="10.8" y="6.2" width="3.1" height="3.1" fill="#f3f4f6"/><rect x="10.8" y="10.8" width="3.1" height="3.1" fill="#f3f4f6"/><rect x="10.8" y="15.4" width="3.1" height="3.1" fill="#f3f4f6"/><rect x="15.4" y="6.2" width="3.1" height="3.1" fill="#f3f4f6"/><rect x="15.4" y="10.8" width="3.1" height="3.1" fill="#f3f4f6"/><rect x="15.4" y="15.4" width="3.1" height="3.1" fill="#f3f4f6"/><path d="M5.2 0V19.5M9.8 0V5.5M14.3 0V5.5M0 9.4H5.5M0 14H5.5M0 5.3H19.5" stroke="#00a3b8" stroke-width="0.9"/></svg></div>
<div class="c" style="left:33px">jobs</div>
<div class="bar" style="left:151px;width:4.7px"></div>
<div class="c" style="left:160px">26</div>
<div class="bar" style="left:239px;width:12.0px"></div>
<div class="c sz" style="left:240.5px">16.0 KiB</div>
<div class="c dt" style="left:337px">2023-09-16 12:39:14</div>
<div class="c dt" style="left:486px">2025-09-10 13:30:18</div>
<div class="c" style="left:637px">InnoDB</div>
<div class="c" style="left:849px">Table</div>
</div>
<div class="row" style="top:946px;background:#ffffff">
<div class="ncol" style="background:#f0f0f0"></div>
<div class="ticon"><svg width="20" height="20" viewBox="0 0 20 20"><rect x="0" y="0" width="19.5" height="19.5" rx="0.8" fill="#00bcd4"/><rect x="5.5" y="5.5" width="14" height="14" fill="#a6d2f6"/><rect x="6.2" y="6.2" width="3.1" height="3.1" fill="#f3f4f6"/><rect x="6.2" y="10.8" width="3.1" height="3.1" fill="#f3f4f6"/><rect x="6.2" y="15.4" width="3.1" height="3.1" fill="#f3f4f6"/><rect x="10.8" y="6.2" width="3.1" height="3.1" fill="#f3f4f6"/><rect x="10.8" y="10.8" width="3.1" height="3.1" fill="#f3f4f6"/><rect x="10.8" y="15.4" width="3.1" height="3.1" fill="#f3f4f6"/><rect x="15.4" y="6.2" width="3.1" height="3.1" fill="#f3f4f6"/><rect x="15.4" y="10.8" width="3.1" height="3.1" fill="#f3f4f6"/><rect x="15.4" y="15.4" width="3.1" height="3.1" fill="#f3f4f6"/><path d="M5.2 0V19.5M9.8 0V5.5M14.3 0V5.5M0 9.4H5.5M0 14H5.5M0 5.3H19.5" stroke="#00a3b8" stroke-width="0.9"/></svg></div>
<div class="c" style="left:33px">licenses</div>
<div class="c" style="left:160px">0</div>
<div class="bar" style="left:239px;width:12.0px"></div>
<div class="c sz" style="left:240.5px">16.0 KiB</div>
<div class="c dt" style="left:337px">2023-09-16 12:39:14</div>
<div class="c dt" style="left:486px"></div>
<div class="c" style="left:637px">InnoDB</div>
<div class="c" style="left:849px">Table</div>
</div>
 <div class="vl" style="left:150px;top:28px"></div>
 <div class="vl" style="left:239px;top:28px"></div>
 <div class="vl" style="left:326px;top:28px"></div>
 <div class="vl" style="left:476px;top:28px"></div>
 <div class="vl" style="left:626px;top:28px"></div>
 <div class="vl" style="left:714px;top:28px"></div>
 <div class="vl" style="left:839px;top:28px"></div>
 <div class="vl" style="left:902px;top:28px"></div>
</div>
<div class="abs" style="left:3px;top:90.5px"><svg width="20" height="20" viewBox="0 0 20 20"><path d="M0.3 0.3H17.5L11 7.5V16.8L7.5 14.5V7.5Z" fill="#fcc978"/><rect x="0" y="5" width="8" height="2.6" rx="0.8" fill="#dcd2f5"/><rect x="0" y="8" width="8" height="2.6" rx="0.8" fill="#dcd2f5"/><rect x="0" y="11" width="8" height="2.6" rx="0.8" fill="#dcd2f5"/><path d="M10 13H18.5L14.25 18Z" fill="#6f6f6f"/></svg></div>
<div class="abs" style="left:263px;top:90.5px"><svg width="20" height="20" viewBox="0 0 20 20"><path d="M0.3 0.3H17.5L11 7.5V16.8L7.5 14.5V7.5Z" fill="#fcc978"/><rect x="0" y="5.5" width="7" height="7.5" fill="#b3d9f7"/><rect x="0" y="5.5" width="7" height="2.2" fill="#00acc1"/><rect x="0" y="5.5" width="2" height="7.5" fill="#00acc1"/><path d="M10 13H18.5L14.25 18Z" fill="#6f6f6f"/></svg></div>
<svg class="abs" style="left:524px;top:90.8px" width="20" height="20" viewBox="0 0 20 20"><polygon points="10.00,0.70 12.41,6.98 19.13,7.33 13.90,11.57 15.64,18.07 10.00,14.40 4.36,18.07 6.10,11.57 0.87,7.33 7.59,6.98" fill="#c8c8c8" stroke="#c8c8c8" stroke-width="0.8" stroke-linejoin="round"/></svg>
<svg class="abs" style="left:617px;top:129px" width="11" height="7" viewBox="0 0 11 7"><path d="M1 5.8L5.5 1.2L10 5.8" fill="none" stroke="#555" stroke-width="1.1"/></svg>
<div class="abs" style="left:589px;top:550px;width:164px;height:26px;background:rgba(240,245,250,0.45);border:1px solid rgba(140,150,160,0.5);box-shadow:3px 3px 3px rgba(50,50,50,0.45)"></div>
<div class="abs tt" style="left:594px;top:551.5px;color:rgba(110,110,110,0.5);letter-spacing:-0.3px">brutal_housing_garages</div>
<svg class="abs" style="left:0;top:0" width="2047" height="1071" viewBox="0 0 2047 1071"><g fill="none" stroke="#ec1c24" stroke-width="7" stroke-linecap="round" stroke-linejoin="round"><path d="M389.2 219.8C355 208 325 197 308 184.3C308.5 200 312.7 215 312.9 230C313 245 312.7 262 311.4 286"/><path d="M337 238.4C345 255 353 280 358.4 300C366 324.3 372 340 376 356C382 380 388.5 411 398 450C408 489 415 520 420.4 552.8C426 585 431 616.6 434 640C438.2 677 440 703.5 440 703.5"/></g></svg>
<div id="bottom"></div>
</body></html>
